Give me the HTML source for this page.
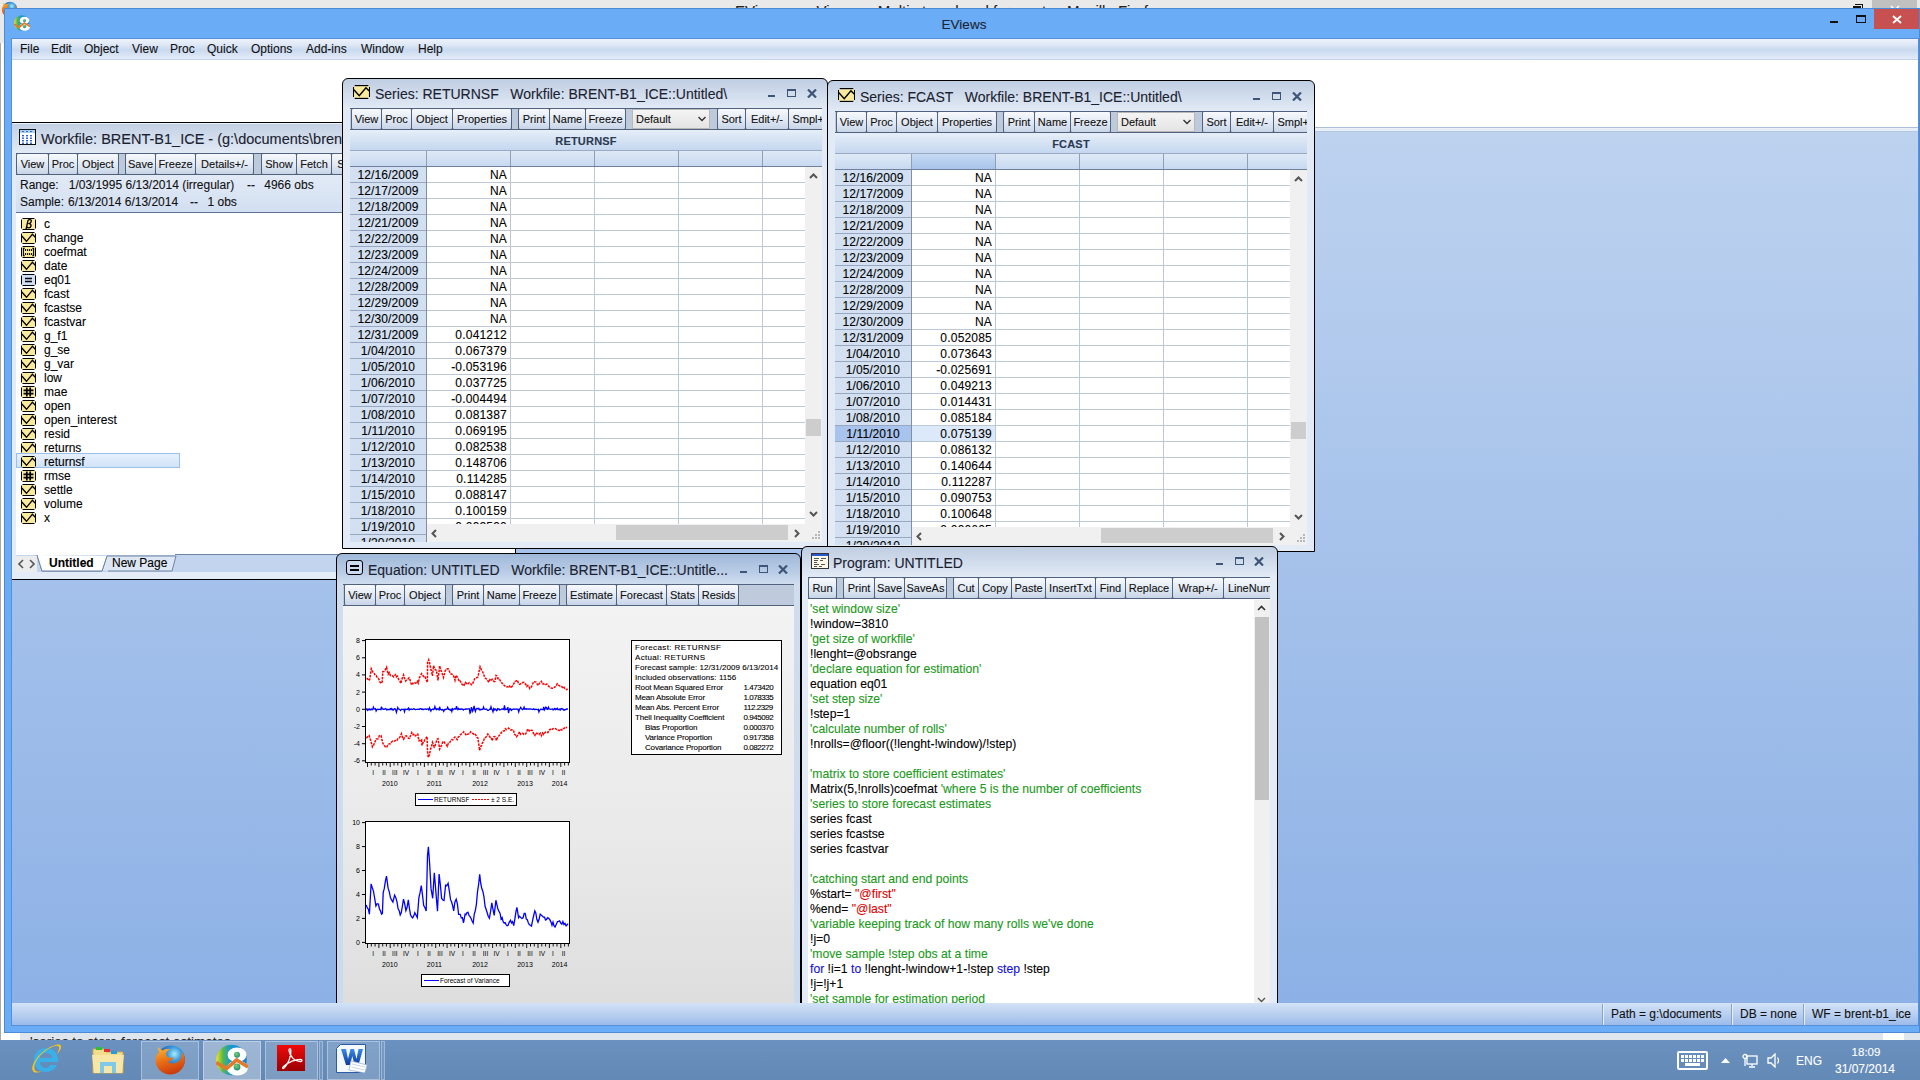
<!DOCTYPE html><html><head><meta charset="utf-8"><style>html,body{margin:0;padding:0;width:1920px;height:1080px;overflow:hidden;position:relative;background:#fff;font-family:"Liberation Sans",sans-serif}div{-webkit-text-stroke:0.1px currentColor}</style></head><body>
<div style="position:absolute;left:0px;top:0px;width:1920px;height:9px;background:#e9e9e9"></div>
<div style="position:absolute;left:0px;top:9px;width:4px;height:34px;background:#e9e9e9"></div>
<div style="position:absolute;left:0px;top:43px;width:1px;height:1000px;background:#a8a8a8"></div>
<div style="position:absolute;left:1872px;top:0px;width:45px;height:9px;background:#c0c0c0"></div>
<svg style="position:absolute;left:1px;top:1px" width="17" height="17" viewBox="0 0 32 32"><defs><radialGradient id="ffga" cx="0.62" cy="0.3" r="0.7"><stop offset="0" stop-color="#a8ecfa"/><stop offset="0.35" stop-color="#3a9ae0"/><stop offset="1" stop-color="#12307a"/></radialGradient><linearGradient id="ffoa" x1="0.3" y1="0" x2="0.6" y2="1"><stop offset="0" stop-color="#f8b030"/><stop offset="0.5" stop-color="#e86a14"/><stop offset="1" stop-color="#c8380c"/></linearGradient></defs><circle cx="17" cy="15.5" r="14" fill="url(#ffga)"/><path d="M5 8L3.5 3L8.5 6.5C11 5 14 4.8 16.5 5.5C13 6.5 11.5 9 12.5 11.5C13.5 14 17 14.5 19.5 13C19 16 16 17.5 13.5 17.5C16.5 20.5 22 20 25.5 16.5C28 13.5 28 10 27.5 7.5C30.5 11 31.5 15 30.5 19C29 26 23 30.5 16 30.5C8 30.5 1.5 24 1.5 16C1.5 13 2.5 10.5 5 8Z" fill="url(#ffoa)"/></svg>
<div style="position:absolute;left:700px;top:0px;width:500px;height:9px;overflow:hidden;">
<div style="position:absolute;left:35px;top:2.18px;line-height:17.23px;font-size:15px;color:#222;white-space:pre;">EViews  —  Vine  —  Multi-step ahead forecasts - Mozilla Firefox</div>
</div>
<div style="position:absolute;left:1855px;top:4px;width:8px;height:5px;border:1px solid #111;border-top-width:1.5px;border-bottom:none;border-left:none;box-sizing:border-box"></div>
<div style="position:absolute;left:1853px;top:6px;width:8px;height:2.5px;background:#111"></div>
<svg style="position:absolute;left:1890px;top:5px" width="10" height="4" viewBox="0 0 10 4"><path d="M1 1L4 4M9 1L6 4" stroke="#fff" stroke-width="1.6"/></svg>
<div style="position:absolute;left:4px;top:8px;width:1916px;height:1025px;background:#6aacf5;box-shadow:inset 0 0 0 1px #4a8ad6"></div>
<svg style="position:absolute;left:14px;top:15px" width="16" height="16" viewBox="0 0 32 32"><defs><linearGradient id="evga" x1="0" y1="0" x2="1" y2="0"><stop offset="0" stop-color="#f2e21e"/><stop offset="0.22" stop-color="#58b84a"/><stop offset="0.45" stop-color="#1a9ad0"/><stop offset="1" stop-color="#1a80cc"/></linearGradient><radialGradient id="evda" cx="0.4" cy="0.35" r="0.7"><stop offset="0" stop-color="#7cd07a"/><stop offset="1" stop-color="#1a8a6a"/></radialGradient></defs><circle cx="15.5" cy="16" r="15.3" fill="url(#evga)"/><ellipse cx="21" cy="10.8" rx="9.4" ry="7.4" fill="#fff"/><ellipse cx="21.3" cy="24" rx="10.6" ry="7.6" fill="#fff"/><circle cx="21" cy="10.8" r="3" fill="url(#evda)"/><circle cx="21" cy="23" r="3.4" fill="url(#evda)"/><polyline points="0.3,18.5 10.5,24.5 20.6,16 32,23" fill="none" stroke="#e27a2a" stroke-width="3.6" stroke-linejoin="miter"/></svg>
<div style="position:absolute;left:664px;width:600px;top:16.57px;line-height:15.51px;font-size:13.5px;color:#1c2530;text-align:center;white-space:pre;">EViews</div>
<div style="position:absolute;left:1830px;top:21px;width:8px;height:2px;background:#111"></div>
<div style="position:absolute;left:1856px;top:15px;width:10px;height:8px;box-sizing:border-box;border:1px solid #111;border-top-width:2px"></div>
<div style="position:absolute;left:1874px;top:9px;width:45px;height:20px;background:#c75050"></div>
<svg style="position:absolute;left:1892px;top:15px" width="10" height="9" viewBox="0 0 10 9"><path d="M1 1L9 8M9 1L1 8" stroke="#fff" stroke-width="1.9"/></svg>
<div style="position:absolute;left:11px;top:38px;width:1908px;height:988px;background:#5590d8"></div>
<div style="position:absolute;left:12px;top:39px;width:1906px;height:21px;background:linear-gradient(#eef3fb 0%,#dde7f5 30%,#c9d9ef 55%,#d8e4f4 80%,#e3ebf7 100%);border-bottom:1px solid #c2d3ea;box-sizing:border-box"></div>
<div style="position:absolute;left:20px;top:42.95px;line-height:13.79px;font-size:12px;color:#111;white-space:pre;">File</div>
<div style="position:absolute;left:51px;top:42.95px;line-height:13.79px;font-size:12px;color:#111;white-space:pre;">Edit</div>
<div style="position:absolute;left:84px;top:42.95px;line-height:13.79px;font-size:12px;color:#111;white-space:pre;">Object</div>
<div style="position:absolute;left:132px;top:42.95px;line-height:13.79px;font-size:12px;color:#111;white-space:pre;">View</div>
<div style="position:absolute;left:170px;top:42.95px;line-height:13.79px;font-size:12px;color:#111;white-space:pre;">Proc</div>
<div style="position:absolute;left:207px;top:42.95px;line-height:13.79px;font-size:12px;color:#111;white-space:pre;">Quick</div>
<div style="position:absolute;left:251px;top:42.95px;line-height:13.79px;font-size:12px;color:#111;white-space:pre;">Options</div>
<div style="position:absolute;left:306px;top:42.95px;line-height:13.79px;font-size:12px;color:#111;white-space:pre;">Add-ins</div>
<div style="position:absolute;left:361px;top:42.95px;line-height:13.79px;font-size:12px;color:#111;white-space:pre;">Window</div>
<div style="position:absolute;left:418px;top:42.95px;line-height:13.79px;font-size:12px;color:#111;white-space:pre;">Help</div>
<div style="position:absolute;left:12px;top:60px;width:1906px;height:68px;background:#fff"></div>
<div style="position:absolute;left:12px;top:127px;width:1906px;height:1px;background:#a9bfdc"></div>
<div style="position:absolute;left:12px;top:128px;width:1906px;height:3px;background:#e8eff9"></div>
<div style="position:absolute;left:12px;top:131px;width:1906px;height:1px;background:#b4c7e2"></div>
<div style="position:absolute;left:12px;top:132px;width:1906px;height:871px;background:linear-gradient(#bdd2ef,#8db1e6)"></div>
<div style="position:absolute;left:12px;top:1003px;width:1906px;height:22px;background:linear-gradient(#d3e2f6,#b9d0f0 50%,#9cbbea)"></div>
<div style="position:absolute;left:1602px;top:1004px;width:1px;height:21px;background:#8aa3c5"></div>
<div style="position:absolute;left:1603px;top:1004px;width:1px;height:21px;background:#e6eef9"></div>
<div style="position:absolute;left:1731px;top:1004px;width:1px;height:21px;background:#8aa3c5"></div>
<div style="position:absolute;left:1732px;top:1004px;width:1px;height:21px;background:#e6eef9"></div>
<div style="position:absolute;left:1803px;top:1004px;width:1px;height:21px;background:#8aa3c5"></div>
<div style="position:absolute;left:1804px;top:1004px;width:1px;height:21px;background:#e6eef9"></div>
<div style="position:absolute;left:1611px;top:1007.95px;line-height:13.79px;font-size:12px;color:#111;white-space:pre;">Path = g:\documents</div>
<div style="position:absolute;left:1740px;top:1007.95px;line-height:13.79px;font-size:12px;color:#111;white-space:pre;">DB = none</div>
<div style="position:absolute;left:1812px;top:1007.95px;line-height:13.79px;font-size:12px;color:#111;white-space:pre;">WF = brent-b1_ice</div>
<div style="position:absolute;left:20px;top:1033px;width:1900px;height:7px;background:#dfe5ec"></div>
<div style="position:absolute;left:1883px;top:1033px;width:21px;height:7px;background:#fff"></div>
<div style="position:absolute;left:20px;top:1033px;width:1900px;height:7px;overflow:hidden;">
<div style="position:absolute;left:10px;top:1.07px;line-height:15.51px;font-size:13.5px;color:#222;white-space:pre;">&#x27;series to store forecast estimates</div>
</div>
<div style="position:absolute;left:0px;top:1040px;width:1920px;height:40px;background:linear-gradient(#6a91bf,#6389b6)"></div>
<div style="position:absolute;left:141px;top:1041px;width:58px;height:39px;box-sizing:border-box;border:1px solid rgba(255,255,255,0.35);background:rgba(255,255,255,0.16)"></div>
<div style="position:absolute;left:203px;top:1041px;width:58px;height:39px;box-sizing:border-box;border:1px solid rgba(255,255,255,0.35);background:rgba(255,255,255,0.34)"></div>
<div style="position:absolute;left:265px;top:1041px;width:53px;height:39px;box-sizing:border-box;border:1px solid rgba(255,255,255,0.35);background:rgba(255,255,255,0.16)"></div>
<div style="position:absolute;left:319px;top:1041px;width:4px;height:39px;box-sizing:border-box;border:1px solid rgba(255,255,255,0.3);background:rgba(255,255,255,0.1)"></div>
<div style="position:absolute;left:327px;top:1041px;width:53px;height:39px;box-sizing:border-box;border:1px solid rgba(255,255,255,0.35);background:rgba(255,255,255,0.16)"></div>
<div style="position:absolute;left:381px;top:1041px;width:4px;height:39px;box-sizing:border-box;border:1px solid rgba(255,255,255,0.3);background:rgba(255,255,255,0.1)"></div>
<svg style="position:absolute;left:30px;top:1043px" width="32" height="32" viewBox="0 0 32 32"><path d="M16 5C9 5 4 10 4 17C4 24 9 29 16 29C21 29 25 26 27 22H20C19 24 18 25 16 25C13 25 10 23 10 19H28C28 18 28 17 28 17C28 10 23 5 16 5ZM10 15C10 12 13 10 16 10C19 10 22 12 22 15Z" fill="#3ab0ea"/><path d="M3 28C0 24 6 14 14 8C22 2 30 0 31 3C32 6 27 11 27 11C29 7 30 4 28 3C25 2 19 5 13 10C6 16 3 23 5 27C6 29 9 29 12 28C8 30 4 30 3 28Z" fill="#f7c21a"/></svg>
<svg style="position:absolute;left:91px;top:1046px" width="34" height="28" viewBox="0 0 34 28"><path d="M2 3H13L15 6H32V27H2Z" fill="#f3dc8a" stroke="#c9a750" stroke-width="1"/><rect x="5" y="1" width="6" height="3" fill="#2ec02e"/><rect x="13" y="3" width="6" height="3" fill="#e03030"/><rect x="20" y="5" width="6" height="3" fill="#2a9ae0"/><path d="M1 9H33L31 27H3Z" fill="#f8e6a6"/><path d="M9 27V16H25V27H21V20H13V27Z" fill="#7ec8ea"/></svg>
<svg style="position:absolute;left:154px;top:1044px" width="32" height="32" viewBox="0 0 32 32"><defs><radialGradient id="ffgb" cx="0.62" cy="0.3" r="0.7"><stop offset="0" stop-color="#a8ecfa"/><stop offset="0.35" stop-color="#3a9ae0"/><stop offset="1" stop-color="#12307a"/></radialGradient><linearGradient id="ffob" x1="0.3" y1="0" x2="0.6" y2="1"><stop offset="0" stop-color="#f8b030"/><stop offset="0.5" stop-color="#e86a14"/><stop offset="1" stop-color="#c8380c"/></linearGradient></defs><circle cx="17" cy="15.5" r="14" fill="url(#ffgb)"/><path d="M5 8L3.5 3L8.5 6.5C11 5 14 4.8 16.5 5.5C13 6.5 11.5 9 12.5 11.5C13.5 14 17 14.5 19.5 13C19 16 16 17.5 13.5 17.5C16.5 20.5 22 20 25.5 16.5C28 13.5 28 10 27.5 7.5C30.5 11 31.5 15 30.5 19C29 26 23 30.5 16 30.5C8 30.5 1.5 24 1.5 16C1.5 13 2.5 10.5 5 8Z" fill="url(#ffob)"/></svg>
<svg style="position:absolute;left:216px;top:1044px" width="32" height="32" viewBox="0 0 32 32"><defs><linearGradient id="evgb" x1="0" y1="0" x2="1" y2="0"><stop offset="0" stop-color="#f2e21e"/><stop offset="0.22" stop-color="#58b84a"/><stop offset="0.45" stop-color="#1a9ad0"/><stop offset="1" stop-color="#1a80cc"/></linearGradient><radialGradient id="evdb" cx="0.4" cy="0.35" r="0.7"><stop offset="0" stop-color="#7cd07a"/><stop offset="1" stop-color="#1a8a6a"/></radialGradient></defs><circle cx="15.5" cy="16" r="15.3" fill="url(#evgb)"/><ellipse cx="21" cy="10.8" rx="9.4" ry="7.4" fill="#fff"/><ellipse cx="21.3" cy="24" rx="10.6" ry="7.6" fill="#fff"/><circle cx="21" cy="10.8" r="3" fill="url(#evdb)"/><circle cx="21" cy="23" r="3.4" fill="url(#evdb)"/><polyline points="0.3,18.5 10.5,24.5 20.6,16 32,23" fill="none" stroke="#e27a2a" stroke-width="3.6" stroke-linejoin="miter"/></svg>
<svg style="position:absolute;left:277px;top:1045px" width="28" height="26" viewBox="0 0 28 26"><defs><linearGradient id="acg" x1="0" y1="0" x2="0" y2="1"><stop offset="0" stop-color="#f00a0a"/><stop offset="1" stop-color="#9a0000"/></linearGradient></defs><rect width="28" height="26" fill="url(#acg)"/><path d="M6.5 21.5C4.8 23.2 5.8 24.3 7.6 22.6C11.5 18.5 14.5 10 13.8 5C13.5 3.2 11.6 3.4 12 5.6C12.8 10.5 17 16.5 23.5 16.5C25.5 16.5 25.5 14.3 23.5 14.3C19 14.3 11.5 16.8 6.5 21.5Z" fill="none" stroke="#fff" stroke-width="1.3"/></svg>
<svg style="position:absolute;left:336px;top:1044px" width="32" height="30" viewBox="0 0 32 30"><defs><linearGradient id="wdg" x1="0" y1="0" x2="0" y2="1"><stop offset="0" stop-color="#3a8ae8"/><stop offset="1" stop-color="#0a3aa0"/></linearGradient></defs><path d="M4.5 0.5H29.5V28.5H0.5V4.5Z" fill="#f4f8fd" stroke="#2a5aa8" stroke-width="1"/><path d="M5 5H10L12 15L14.5 5H18L20.5 15L22.5 5H27L22.5 21H18.5L16.3 12L14 21H10Z" fill="url(#wdg)"/><path d="M15 17L31 21L29 29L13 26Z" fill="#fff" stroke="#9ab4d8" stroke-width="0.8"/><path d="M16 20L29 23M15.5 23L28 26" stroke="#b8cce6" stroke-width="0.8"/></svg>
<div style="position:absolute;left:1677px;top:1051px;width:31px;height:19px;box-sizing:border-box;border:2px solid #fff;border-radius:2px"></div>
<svg style="position:absolute;left:1680px;top:1054px" width="25" height="13" viewBox="0 0 25 13" fill="#fff"><rect x="1" y="1" width="3" height="3"/><rect x="1" y="5" width="3" height="3"/><rect x="5" y="1" width="3" height="3"/><rect x="5" y="5" width="3" height="3"/><rect x="9" y="1" width="3" height="3"/><rect x="9" y="5" width="3" height="3"/><rect x="13" y="1" width="3" height="3"/><rect x="13" y="5" width="3" height="3"/><rect x="17" y="1" width="3" height="3"/><rect x="17" y="5" width="3" height="3"/><rect x="21" y="1" width="3" height="3"/><rect x="21" y="5" width="3" height="3"/><rect x="5" y="9" width="15" height="3"/></svg>
<svg style="position:absolute;left:1721px;top:1058px" width="9" height="5" viewBox="0 0 9 5"><path d="M0 5L4.5 0L9 5Z" fill="#fff"/></svg>
<svg style="position:absolute;left:1742px;top:1053px" width="16" height="15" viewBox="0 0 16 15" fill="none" stroke="#fff" stroke-width="1.3"><rect x="5" y="3" width="10" height="8"/><path d="M10 11V13M7 14H13"/><circle cx="3" cy="3.5" r="2"/><path d="M3 5.5V13"/></svg>
<svg style="position:absolute;left:1767px;top:1053px" width="14" height="15" viewBox="0 0 14 15"><path d="M1 5H4L8 1V14L4 10H1Z" fill="none" stroke="#fff" stroke-width="1.3"/><path d="M10.5 4.5Q12.5 7.5 10.5 10.5" fill="none" stroke="#fff" stroke-width="1.2"/></svg>
<div style="position:absolute;left:1796px;top:1054.95px;line-height:13.79px;font-size:12px;color:#fff;white-space:pre;">ENG</div>
<div style="position:absolute;left:1566px;width:600px;top:1046.41px;line-height:13.21px;font-size:11.5px;color:#fff;text-align:center;white-space:pre;">18:09</div>
<div style="position:absolute;left:1565px;width:600px;top:1062.95px;line-height:13.79px;font-size:12px;color:#fff;text-align:center;white-space:pre;">31/07/2014</div>
<div style="position:absolute;left:12px;top:122px;width:504px;height:458px;box-sizing:border-box;border-top:1px solid #000;border-right:1px solid #000;border-bottom:1px solid #000;background:linear-gradient(#c2d0e4 0px,#d3deed 16px,#e2eaf5 30px,#e4ecf7 100%)"></div>
<div style="position:absolute;left:13px;top:123px;width:502px;height:1px;background:#eef3fa"></div>
<svg style="position:absolute;left:19px;top:129px" width="17" height="16" viewBox="0 0 17 16"><rect x="0.5" y="0.5" width="16" height="15" fill="#fff" stroke="#111"/><rect x="1" y="1" width="15" height="3" fill="#a8d0f0"/><path d="M3 2.5H5M7 2.5H9M11 2.5H13" stroke="#3a6ab0" stroke-width="1"/><rect x="3" y="6.0" width="2" height="1.4" fill="#2a60d8"/><rect x="3" y="8.5" width="2" height="1.4" fill="#2a60d8"/><rect x="3" y="11.0" width="2" height="1.4" fill="#2a60d8"/><rect x="3" y="13.5" width="2" height="1.4" fill="#2a60d8"/><rect x="7" y="6.0" width="2" height="1.4" fill="#2a60d8"/><rect x="7" y="8.5" width="2" height="1.4" fill="#2a60d8"/><rect x="7" y="11.0" width="2" height="1.4" fill="#2a60d8"/><rect x="7" y="13.5" width="2" height="1.4" fill="#2a60d8"/><rect x="11" y="6.0" width="2" height="1.4" fill="#2a60d8"/><rect x="11" y="8.5" width="2" height="1.4" fill="#2a60d8"/><rect x="11" y="11.0" width="2" height="1.4" fill="#2a60d8"/><rect x="11" y="13.5" width="2" height="1.4" fill="#2a60d8"/></svg>
<div style="position:absolute;left:12px;top:124px;width:330px;height:28px;overflow:hidden;">
<div style="position:absolute;left:29px;top:6.65px;line-height:16.66px;font-size:14.5px;color:#1a2230;white-space:pre;">Workfile: BRENT-B1_ICE - (g:\documents\brent-b1_ice.wf1)</div>
</div>
<div style="position:absolute;left:16px;top:153px;width:499px;height:22px;background:#bfcbdc;border-top:1px solid #50627e;border-bottom:1px solid #50627e;box-sizing:border-box"></div>
<div style="position:absolute;left:16px;top:153px;width:33px;height:22px;box-sizing:border-box;border:1px solid #50627e;border-radius:2px;background:linear-gradient(#f7f9fd,#e3eaf4 50%,#c8d5e7);"></div>
<div style="position:absolute;left:-267.5px;width:600px;top:158.37px;line-height:12.64px;font-size:11px;color:#111;text-align:center;white-space:pre;">View</div>
<div style="position:absolute;left:48px;top:153px;width:30px;height:22px;box-sizing:border-box;border:1px solid #50627e;border-radius:2px;background:linear-gradient(#f7f9fd,#e3eaf4 50%,#c8d5e7);"></div>
<div style="position:absolute;left:-237.0px;width:600px;top:158.37px;line-height:12.64px;font-size:11px;color:#111;text-align:center;white-space:pre;">Proc</div>
<div style="position:absolute;left:77px;top:153px;width:42px;height:22px;box-sizing:border-box;border:1px solid #50627e;border-radius:2px;background:linear-gradient(#f7f9fd,#e3eaf4 50%,#c8d5e7);"></div>
<div style="position:absolute;left:-202.0px;width:600px;top:158.37px;line-height:12.64px;font-size:11px;color:#111;text-align:center;white-space:pre;">Object</div>
<div style="position:absolute;left:119px;top:154px;width:7px;height:20px;background:#bccadb"></div>
<div style="position:absolute;left:125px;top:153px;width:31px;height:22px;box-sizing:border-box;border:1px solid #50627e;border-radius:2px;background:linear-gradient(#f7f9fd,#e3eaf4 50%,#c8d5e7);"></div>
<div style="position:absolute;left:-159.5px;width:600px;top:158.37px;line-height:12.64px;font-size:11px;color:#111;text-align:center;white-space:pre;">Save</div>
<div style="position:absolute;left:155px;top:153px;width:41px;height:22px;box-sizing:border-box;border:1px solid #50627e;border-radius:2px;background:linear-gradient(#f7f9fd,#e3eaf4 50%,#c8d5e7);"></div>
<div style="position:absolute;left:-124.5px;width:600px;top:158.37px;line-height:12.64px;font-size:11px;color:#111;text-align:center;white-space:pre;">Freeze</div>
<div style="position:absolute;left:195px;top:153px;width:59px;height:22px;box-sizing:border-box;border:1px solid #50627e;border-radius:2px;background:linear-gradient(#f7f9fd,#e3eaf4 50%,#c8d5e7);"></div>
<div style="position:absolute;left:-75.5px;width:600px;top:158.37px;line-height:12.64px;font-size:11px;color:#111;text-align:center;white-space:pre;">Details+/-</div>
<div style="position:absolute;left:254px;top:154px;width:7px;height:20px;background:#bccadb"></div>
<div style="position:absolute;left:261px;top:153px;width:36px;height:22px;box-sizing:border-box;border:1px solid #50627e;border-radius:2px;background:linear-gradient(#f7f9fd,#e3eaf4 50%,#c8d5e7);"></div>
<div style="position:absolute;left:-21.0px;width:600px;top:158.37px;line-height:12.64px;font-size:11px;color:#111;text-align:center;white-space:pre;">Show</div>
<div style="position:absolute;left:296px;top:153px;width:36px;height:22px;box-sizing:border-box;border:1px solid #50627e;border-radius:2px;background:linear-gradient(#f7f9fd,#e3eaf4 50%,#c8d5e7);"></div>
<div style="position:absolute;left:14.0px;width:600px;top:158.37px;line-height:12.64px;font-size:11px;color:#111;text-align:center;white-space:pre;">Fetch</div>
<div style="position:absolute;left:331px;top:153px;width:39px;height:22px;box-sizing:border-box;border:1px solid #50627e;border-radius:2px;background:linear-gradient(#f7f9fd,#e3eaf4 50%,#c8d5e7);"></div>
<div style="position:absolute;left:50.5px;width:600px;top:158.37px;line-height:12.64px;font-size:11px;color:#111;text-align:center;white-space:pre;">Store</div>
<div style="position:absolute;left:369px;top:153px;width:41px;height:22px;box-sizing:border-box;border:1px solid #50627e;border-radius:2px;background:linear-gradient(#f7f9fd,#e3eaf4 50%,#c8d5e7);"></div>
<div style="position:absolute;left:89.5px;width:600px;top:158.37px;line-height:12.64px;font-size:11px;color:#111;text-align:center;white-space:pre;">Delete</div>
<div style="position:absolute;left:409px;top:153px;width:35px;height:22px;box-sizing:border-box;border:1px solid #50627e;border-radius:2px;background:linear-gradient(#f7f9fd,#e3eaf4 50%,#c8d5e7);"></div>
<div style="position:absolute;left:126.5px;width:600px;top:158.37px;line-height:12.64px;font-size:11px;color:#111;text-align:center;white-space:pre;">Genr</div>
<div style="position:absolute;left:443px;top:153px;width:47px;height:22px;box-sizing:border-box;border:1px solid #50627e;border-radius:2px;background:linear-gradient(#f7f9fd,#e3eaf4 50%,#c8d5e7);"></div>
<div style="position:absolute;left:166.5px;width:600px;top:158.37px;line-height:12.64px;font-size:11px;color:#111;text-align:center;white-space:pre;">Sample</div>
<div style="position:absolute;left:16px;top:175px;width:499px;height:38px;background:linear-gradient(#e2eaf6,#d2dff1)"></div>
<div style="position:absolute;left:16px;top:212px;width:499px;height:1px;background:#5f7495"></div>
<div style="position:absolute;left:20px;top:178.95px;line-height:13.79px;font-size:12px;color:#111;white-space:pre;">Range:</div>
<div style="position:absolute;left:68.75px;top:178.95px;line-height:13.79px;font-size:12px;color:#111;white-space:pre;">1/03/1995 6/13/2014 (irregular)</div>
<div style="position:absolute;left:247px;top:178.95px;line-height:13.79px;font-size:12px;color:#111;white-space:pre;">--</div>
<div style="position:absolute;left:264.25px;top:178.95px;line-height:13.79px;font-size:12px;color:#111;white-space:pre;">4966 obs</div>
<div style="position:absolute;left:20px;top:195.95px;line-height:13.79px;font-size:12px;color:#111;white-space:pre;">Sample:</div>
<div style="position:absolute;left:68px;top:195.95px;line-height:13.79px;font-size:12px;color:#111;white-space:pre;">6/13/2014 6/13/2014</div>
<div style="position:absolute;left:190px;top:195.95px;line-height:13.79px;font-size:12px;color:#111;white-space:pre;">--</div>
<div style="position:absolute;left:207.5px;top:195.95px;line-height:13.79px;font-size:12px;color:#111;white-space:pre;">1 obs</div>
<div style="position:absolute;left:16px;top:213px;width:499px;height:343px;background:#fff"></div>
<svg style="position:absolute;left:21px;top:218px" width="15" height="12" viewBox="0 0 15 12"><path d="M1.5 0.5H13.5M14.5 1.5V10.5M13.5 11.5H1.5M0.5 10.5V1.5" stroke="#000" stroke-width="1.15" fill="none"/><rect x="1" y="1" width="13" height="10" fill="#faea9c"/><path d="M5 11.5L7 2.5Q7.5 1.5 9 1.6Q10.6 1.8 10.3 3.3Q10 4.8 8.3 5.6Q10.3 6 10 8Q9.6 9.8 7.8 9.8Q6.6 9.8 5.9 9" fill="none" stroke="#000" stroke-width="1.3"/></svg>
<div style="position:absolute;left:44px;top:218.45px;line-height:13.79px;font-size:12px;color:#000;white-space:pre;">c</div>
<svg style="position:absolute;left:21px;top:232px" width="15" height="12" viewBox="0 0 15 12"><path d="M1.5 0.5H13.5M14.5 1.5V10.5M13.5 11.5H1.5M0.5 10.5V1.5" stroke="#000" stroke-width="1.15" fill="none"/><rect x="1" y="1" width="13" height="10" fill="#faea9c"/><polyline points="0.8,4 5.5,9.3 11.4,2.3 14.3,5.2" fill="none" stroke="#000" stroke-width="1.3"/></svg>
<div style="position:absolute;left:44px;top:232.45px;line-height:13.79px;font-size:12px;color:#000;white-space:pre;">change</div>
<svg style="position:absolute;left:21px;top:246px" width="15" height="12" viewBox="0 0 15 12"><path d="M1.5 0.5H13.5M14.5 1.5V10.5M13.5 11.5H1.5M0.5 10.5V1.5" stroke="#000" stroke-width="1.15" fill="none"/><rect x="1" y="1" width="13" height="10" fill="#faea9c"/><path d="M3.8 2.3H2.4V9.8H3.8M11.2 2.3H12.6V9.8H11.2" fill="none" stroke="#000" stroke-width="1.1"/><rect x="3.9" y="3" width="1.2" height="2" rx="0.5" fill="#000"/><rect x="3.9" y="7" width="1.2" height="2" rx="0.5" fill="#000"/><rect x="6" y="3" width="1.2" height="2" rx="0.5" fill="#000"/><rect x="6" y="7" width="1.2" height="2" rx="0.5" fill="#000"/><rect x="8" y="3" width="1.2" height="2" rx="0.5" fill="#000"/><rect x="8" y="7" width="1.2" height="2" rx="0.5" fill="#000"/><rect x="10" y="3" width="1.2" height="2" rx="0.5" fill="#000"/><rect x="10" y="7" width="1.2" height="2" rx="0.5" fill="#000"/></svg>
<div style="position:absolute;left:44px;top:246.45px;line-height:13.79px;font-size:12px;color:#000;white-space:pre;">coefmat</div>
<svg style="position:absolute;left:21px;top:260px" width="15" height="12" viewBox="0 0 15 12"><path d="M1.5 0.5H13.5M14.5 1.5V10.5M13.5 11.5H1.5M0.5 10.5V1.5" stroke="#000" stroke-width="1.15" fill="none"/><rect x="1" y="1" width="13" height="10" fill="#faea9c"/><polyline points="0.8,4 5.5,9.3 11.4,2.3 14.3,5.2" fill="none" stroke="#000" stroke-width="1.3"/></svg>
<div style="position:absolute;left:44px;top:260.45px;line-height:13.79px;font-size:12px;color:#000;white-space:pre;">date</div>
<svg style="position:absolute;left:21px;top:274px" width="15" height="12" viewBox="0 0 15 12"><path d="M1.5 0.5H13.5M14.5 1.5V10.5M13.5 11.5H1.5M0.5 10.5V1.5" stroke="#000" stroke-width="1.15" fill="none"/><rect x="1" y="1" width="13" height="10" fill="#cfe0f7"/><path d="M4 4.5H11M4 7.5H11" stroke="#000" stroke-width="1.6"/></svg>
<div style="position:absolute;left:44px;top:274.45px;line-height:13.79px;font-size:12px;color:#000;white-space:pre;">eq01</div>
<svg style="position:absolute;left:21px;top:288px" width="15" height="12" viewBox="0 0 15 12"><path d="M1.5 0.5H13.5M14.5 1.5V10.5M13.5 11.5H1.5M0.5 10.5V1.5" stroke="#000" stroke-width="1.15" fill="none"/><rect x="1" y="1" width="13" height="10" fill="#faea9c"/><polyline points="0.8,4 5.5,9.3 11.4,2.3 14.3,5.2" fill="none" stroke="#000" stroke-width="1.3"/></svg>
<div style="position:absolute;left:44px;top:288.45px;line-height:13.79px;font-size:12px;color:#000;white-space:pre;">fcast</div>
<svg style="position:absolute;left:21px;top:302px" width="15" height="12" viewBox="0 0 15 12"><path d="M1.5 0.5H13.5M14.5 1.5V10.5M13.5 11.5H1.5M0.5 10.5V1.5" stroke="#000" stroke-width="1.15" fill="none"/><rect x="1" y="1" width="13" height="10" fill="#faea9c"/><polyline points="0.8,4 5.5,9.3 11.4,2.3 14.3,5.2" fill="none" stroke="#000" stroke-width="1.3"/></svg>
<div style="position:absolute;left:44px;top:302.45px;line-height:13.79px;font-size:12px;color:#000;white-space:pre;">fcastse</div>
<svg style="position:absolute;left:21px;top:316px" width="15" height="12" viewBox="0 0 15 12"><path d="M1.5 0.5H13.5M14.5 1.5V10.5M13.5 11.5H1.5M0.5 10.5V1.5" stroke="#000" stroke-width="1.15" fill="none"/><rect x="1" y="1" width="13" height="10" fill="#faea9c"/><polyline points="0.8,4 5.5,9.3 11.4,2.3 14.3,5.2" fill="none" stroke="#000" stroke-width="1.3"/></svg>
<div style="position:absolute;left:44px;top:316.45px;line-height:13.79px;font-size:12px;color:#000;white-space:pre;">fcastvar</div>
<svg style="position:absolute;left:21px;top:330px" width="15" height="12" viewBox="0 0 15 12"><path d="M1.5 0.5H13.5M14.5 1.5V10.5M13.5 11.5H1.5M0.5 10.5V1.5" stroke="#000" stroke-width="1.15" fill="none"/><rect x="1" y="1" width="13" height="10" fill="#faea9c"/><polyline points="0.8,4 5.5,9.3 11.4,2.3 14.3,5.2" fill="none" stroke="#000" stroke-width="1.3"/></svg>
<div style="position:absolute;left:44px;top:330.45px;line-height:13.79px;font-size:12px;color:#000;white-space:pre;">g_f1</div>
<svg style="position:absolute;left:21px;top:344px" width="15" height="12" viewBox="0 0 15 12"><path d="M1.5 0.5H13.5M14.5 1.5V10.5M13.5 11.5H1.5M0.5 10.5V1.5" stroke="#000" stroke-width="1.15" fill="none"/><rect x="1" y="1" width="13" height="10" fill="#faea9c"/><polyline points="0.8,4 5.5,9.3 11.4,2.3 14.3,5.2" fill="none" stroke="#000" stroke-width="1.3"/></svg>
<div style="position:absolute;left:44px;top:344.45px;line-height:13.79px;font-size:12px;color:#000;white-space:pre;">g_se</div>
<svg style="position:absolute;left:21px;top:358px" width="15" height="12" viewBox="0 0 15 12"><path d="M1.5 0.5H13.5M14.5 1.5V10.5M13.5 11.5H1.5M0.5 10.5V1.5" stroke="#000" stroke-width="1.15" fill="none"/><rect x="1" y="1" width="13" height="10" fill="#faea9c"/><polyline points="0.8,4 5.5,9.3 11.4,2.3 14.3,5.2" fill="none" stroke="#000" stroke-width="1.3"/></svg>
<div style="position:absolute;left:44px;top:358.45px;line-height:13.79px;font-size:12px;color:#000;white-space:pre;">g_var</div>
<svg style="position:absolute;left:21px;top:372px" width="15" height="12" viewBox="0 0 15 12"><path d="M1.5 0.5H13.5M14.5 1.5V10.5M13.5 11.5H1.5M0.5 10.5V1.5" stroke="#000" stroke-width="1.15" fill="none"/><rect x="1" y="1" width="13" height="10" fill="#faea9c"/><polyline points="0.8,4 5.5,9.3 11.4,2.3 14.3,5.2" fill="none" stroke="#000" stroke-width="1.3"/></svg>
<div style="position:absolute;left:44px;top:372.45px;line-height:13.79px;font-size:12px;color:#000;white-space:pre;">low</div>
<svg style="position:absolute;left:21px;top:386px" width="15" height="12" viewBox="0 0 15 12"><path d="M1.5 0.5H13.5M14.5 1.5V10.5M13.5 11.5H1.5M0.5 10.5V1.5" stroke="#000" stroke-width="1.15" fill="none"/><rect x="1" y="1" width="13" height="10" fill="#faea9c"/><path d="M2.5 4.3H12.5M2.5 7.7H12.5M5.8 1.5V10.5M9.2 1.5V10.5" stroke="#000" stroke-width="1.7"/></svg>
<div style="position:absolute;left:44px;top:386.45px;line-height:13.79px;font-size:12px;color:#000;white-space:pre;">mae</div>
<svg style="position:absolute;left:21px;top:400px" width="15" height="12" viewBox="0 0 15 12"><path d="M1.5 0.5H13.5M14.5 1.5V10.5M13.5 11.5H1.5M0.5 10.5V1.5" stroke="#000" stroke-width="1.15" fill="none"/><rect x="1" y="1" width="13" height="10" fill="#faea9c"/><polyline points="0.8,4 5.5,9.3 11.4,2.3 14.3,5.2" fill="none" stroke="#000" stroke-width="1.3"/></svg>
<div style="position:absolute;left:44px;top:400.45px;line-height:13.79px;font-size:12px;color:#000;white-space:pre;">open</div>
<svg style="position:absolute;left:21px;top:414px" width="15" height="12" viewBox="0 0 15 12"><path d="M1.5 0.5H13.5M14.5 1.5V10.5M13.5 11.5H1.5M0.5 10.5V1.5" stroke="#000" stroke-width="1.15" fill="none"/><rect x="1" y="1" width="13" height="10" fill="#faea9c"/><polyline points="0.8,4 5.5,9.3 11.4,2.3 14.3,5.2" fill="none" stroke="#000" stroke-width="1.3"/></svg>
<div style="position:absolute;left:44px;top:414.45px;line-height:13.79px;font-size:12px;color:#000;white-space:pre;">open_interest</div>
<svg style="position:absolute;left:21px;top:428px" width="15" height="12" viewBox="0 0 15 12"><path d="M1.5 0.5H13.5M14.5 1.5V10.5M13.5 11.5H1.5M0.5 10.5V1.5" stroke="#000" stroke-width="1.15" fill="none"/><rect x="1" y="1" width="13" height="10" fill="#faea9c"/><polyline points="0.8,4 5.5,9.3 11.4,2.3 14.3,5.2" fill="none" stroke="#000" stroke-width="1.3"/></svg>
<div style="position:absolute;left:44px;top:428.45px;line-height:13.79px;font-size:12px;color:#000;white-space:pre;">resid</div>
<svg style="position:absolute;left:21px;top:442px" width="15" height="12" viewBox="0 0 15 12"><path d="M1.5 0.5H13.5M14.5 1.5V10.5M13.5 11.5H1.5M0.5 10.5V1.5" stroke="#000" stroke-width="1.15" fill="none"/><rect x="1" y="1" width="13" height="10" fill="#faea9c"/><polyline points="0.8,4 5.5,9.3 11.4,2.3 14.3,5.2" fill="none" stroke="#000" stroke-width="1.3"/></svg>
<div style="position:absolute;left:44px;top:442.45px;line-height:13.79px;font-size:12px;color:#000;white-space:pre;">returns</div>
<div style="position:absolute;left:16px;top:452.5px;width:164px;height:15px;box-sizing:border-box;border:1px solid #9cc0ec;background:linear-gradient(#e6f0fc,#d2e3f8)"></div>
<svg style="position:absolute;left:21px;top:456px" width="15" height="12" viewBox="0 0 15 12"><path d="M1.5 0.5H13.5M14.5 1.5V10.5M13.5 11.5H1.5M0.5 10.5V1.5" stroke="#000" stroke-width="1.15" fill="none"/><rect x="1" y="1" width="13" height="10" fill="#faea9c"/><polyline points="0.8,4 5.5,9.3 11.4,2.3 14.3,5.2" fill="none" stroke="#000" stroke-width="1.3"/></svg>
<div style="position:absolute;left:44px;top:456.45px;line-height:13.79px;font-size:12px;color:#000;white-space:pre;">returnsf</div>
<svg style="position:absolute;left:21px;top:470px" width="15" height="12" viewBox="0 0 15 12"><path d="M1.5 0.5H13.5M14.5 1.5V10.5M13.5 11.5H1.5M0.5 10.5V1.5" stroke="#000" stroke-width="1.15" fill="none"/><rect x="1" y="1" width="13" height="10" fill="#faea9c"/><path d="M2.5 4.3H12.5M2.5 7.7H12.5M5.8 1.5V10.5M9.2 1.5V10.5" stroke="#000" stroke-width="1.7"/></svg>
<div style="position:absolute;left:44px;top:470.45px;line-height:13.79px;font-size:12px;color:#000;white-space:pre;">rmse</div>
<svg style="position:absolute;left:21px;top:484px" width="15" height="12" viewBox="0 0 15 12"><path d="M1.5 0.5H13.5M14.5 1.5V10.5M13.5 11.5H1.5M0.5 10.5V1.5" stroke="#000" stroke-width="1.15" fill="none"/><rect x="1" y="1" width="13" height="10" fill="#faea9c"/><polyline points="0.8,4 5.5,9.3 11.4,2.3 14.3,5.2" fill="none" stroke="#000" stroke-width="1.3"/></svg>
<div style="position:absolute;left:44px;top:484.45px;line-height:13.79px;font-size:12px;color:#000;white-space:pre;">settle</div>
<svg style="position:absolute;left:21px;top:498px" width="15" height="12" viewBox="0 0 15 12"><path d="M1.5 0.5H13.5M14.5 1.5V10.5M13.5 11.5H1.5M0.5 10.5V1.5" stroke="#000" stroke-width="1.15" fill="none"/><rect x="1" y="1" width="13" height="10" fill="#faea9c"/><polyline points="0.8,4 5.5,9.3 11.4,2.3 14.3,5.2" fill="none" stroke="#000" stroke-width="1.3"/></svg>
<div style="position:absolute;left:44px;top:498.45px;line-height:13.79px;font-size:12px;color:#000;white-space:pre;">volume</div>
<svg style="position:absolute;left:21px;top:512px" width="15" height="12" viewBox="0 0 15 12"><path d="M1.5 0.5H13.5M14.5 1.5V10.5M13.5 11.5H1.5M0.5 10.5V1.5" stroke="#000" stroke-width="1.15" fill="none"/><rect x="1" y="1" width="13" height="10" fill="#faea9c"/><polyline points="0.8,4 5.5,9.3 11.4,2.3 14.3,5.2" fill="none" stroke="#000" stroke-width="1.3"/></svg>
<div style="position:absolute;left:44px;top:512.45px;line-height:13.79px;font-size:12px;color:#000;white-space:pre;">x</div>
<div style="position:absolute;left:16px;top:555px;width:499px;height:17px;background:#c3d5ee"></div>
<div style="position:absolute;left:175px;top:554px;width:340px;height:1px;background:#6f84a3"></div>
<div style="position:absolute;left:16px;top:556px;width:21px;height:16px;background:#ececec"></div>
<svg style="position:absolute;left:17px;top:559px" width="20" height="10" viewBox="0 0 20 10"><path d="M6 1L2 5L6 9M13 1L17 5L13 9" fill="none" stroke="#555" stroke-width="1.6"/></svg>
<svg style="position:absolute;left:36px;top:553px" width="142" height="20" viewBox="0 0 142 20"><path d="M1 2L6 18H66L71 3H140L136 18H72" fill="#dde7f4" stroke="#6f84a3" stroke-width="1"/><path d="M1 2L6 18H66L71 3" fill="#fff" stroke="#6f84a3" stroke-width="1"/></svg>
<div style="position:absolute;left:49px;top:556.95px;line-height:13.79px;font-size:12px;color:#000;white-space:pre;font-weight:bold">Untitled</div>
<div style="position:absolute;left:112px;top:556.95px;line-height:13.79px;font-size:12px;color:#000;white-space:pre;">New Page</div>
<div style="position:absolute;left:342px;top:78px;width:486px;height:471px;box-sizing:border-box;border:1px solid #000;border-radius:6px 6px 0 0;background:linear-gradient(#c0cee2 0px,#d4dfee 18px,#e2eaf5 30px,#e3ebf6 100%);overflow:hidden"></div>
<svg style="position:absolute;left:353px;top:85px" width="17" height="14" viewBox="0 0 15 12"><path d="M1.5 0.5H13.5M14.5 1.5V10.5M13.5 11.5H1.5M0.5 10.5V1.5" stroke="#000" stroke-width="1.15" fill="none"/><rect x="1" y="1" width="13" height="10" fill="#faea9c"/><polyline points="0.8,4 5.5,9.3 11.4,2.3 14.3,5.2" fill="none" stroke="#000" stroke-width="1.3"/></svg>
<div style="position:absolute;left:343px;top:79px;width:418px;height:29px;overflow:hidden;">
<div style="position:absolute;left:32px;top:7.11px;line-height:16.09px;font-size:14px;color:#1a2230;white-space:pre;">Series: RETURNSF   Workfile: BRENT-B1_ICE::Untitled\</div>
</div>
<div style="position:absolute;left:767.5px;top:94.8px;width:7.5px;height:2.2px;background:#3d5577"></div>
<div style="position:absolute;left:787px;top:89px;width:9px;height:8px;box-sizing:border-box;border:1.3px solid #3d5577;border-top-width:2.6px"></div>
<svg style="position:absolute;left:807px;top:89px" width="10" height="9" viewBox="0 0 10 9"><path d="M1 0.5L9 8.5M9 0.5L1 8.5" stroke="#3d5577" stroke-width="2.2"/></svg>
<div style="position:absolute;left:350px;top:108px;width:472px;height:22px;overflow:hidden;">
<div style="position:absolute;left:0px;top:0px;width:472px;height:22px;background:#bfcbdc;border-top:1px solid #50627e;border-bottom:1px solid #50627e;box-sizing:border-box"></div><div style="position:absolute;left:1px;top:0px;width:31px;height:22px;box-sizing:border-box;border:1px solid #50627e;border-radius:2px;background:linear-gradient(#f7f9fd,#e3eaf4 50%,#c8d5e7);"></div><div style="position:absolute;left:-283.5px;width:600px;top:5.37px;line-height:12.64px;font-size:11px;color:#111;text-align:center;white-space:pre;">View</div><div style="position:absolute;left:31px;top:0px;width:31px;height:22px;box-sizing:border-box;border:1px solid #50627e;border-radius:2px;background:linear-gradient(#f7f9fd,#e3eaf4 50%,#c8d5e7);"></div><div style="position:absolute;left:-253.5px;width:600px;top:5.37px;line-height:12.64px;font-size:11px;color:#111;text-align:center;white-space:pre;">Proc</div><div style="position:absolute;left:61px;top:0px;width:42px;height:22px;box-sizing:border-box;border:1px solid #50627e;border-radius:2px;background:linear-gradient(#f7f9fd,#e3eaf4 50%,#c8d5e7);"></div><div style="position:absolute;left:-218.0px;width:600px;top:5.37px;line-height:12.64px;font-size:11px;color:#111;text-align:center;white-space:pre;">Object</div><div style="position:absolute;left:102px;top:0px;width:60px;height:22px;box-sizing:border-box;border:1px solid #50627e;border-radius:2px;background:linear-gradient(#f7f9fd,#e3eaf4 50%,#c8d5e7);"></div><div style="position:absolute;left:-168.0px;width:600px;top:5.37px;line-height:12.64px;font-size:11px;color:#111;text-align:center;white-space:pre;">Properties</div><div style="position:absolute;left:162px;top:1px;width:7px;height:20px;background:#bccadb"></div><div style="position:absolute;left:168px;top:0px;width:32px;height:22px;box-sizing:border-box;border:1px solid #50627e;border-radius:2px;background:linear-gradient(#f7f9fd,#e3eaf4 50%,#c8d5e7);"></div><div style="position:absolute;left:-116.0px;width:600px;top:5.37px;line-height:12.64px;font-size:11px;color:#111;text-align:center;white-space:pre;">Print</div><div style="position:absolute;left:199px;top:0px;width:37px;height:22px;box-sizing:border-box;border:1px solid #50627e;border-radius:2px;background:linear-gradient(#f7f9fd,#e3eaf4 50%,#c8d5e7);"></div><div style="position:absolute;left:-82.5px;width:600px;top:5.37px;line-height:12.64px;font-size:11px;color:#111;text-align:center;white-space:pre;">Name</div><div style="position:absolute;left:235px;top:0px;width:41px;height:22px;box-sizing:border-box;border:1px solid #50627e;border-radius:2px;background:linear-gradient(#f7f9fd,#e3eaf4 50%,#c8d5e7);"></div><div style="position:absolute;left:-44.5px;width:600px;top:5.37px;line-height:12.64px;font-size:11px;color:#111;text-align:center;white-space:pre;">Freeze</div><div style="position:absolute;left:276px;top:1px;width:6px;height:20px;background:#bccadb"></div><div style="position:absolute;left:360px;top:1px;width:8px;height:20px;background:#bccadb"></div><div style="position:absolute;left:367px;top:0px;width:29px;height:22px;box-sizing:border-box;border:1px solid #50627e;border-radius:2px;background:linear-gradient(#f7f9fd,#e3eaf4 50%,#c8d5e7);"></div><div style="position:absolute;left:81.5px;width:600px;top:5.37px;line-height:12.64px;font-size:11px;color:#111;text-align:center;white-space:pre;">Sort</div><div style="position:absolute;left:395px;top:0px;width:44px;height:22px;box-sizing:border-box;border:1px solid #50627e;border-radius:2px;background:linear-gradient(#f7f9fd,#e3eaf4 50%,#c8d5e7);"></div><div style="position:absolute;left:117.0px;width:600px;top:5.37px;line-height:12.64px;font-size:11px;color:#111;text-align:center;white-space:pre;">Edit+/-</div><div style="position:absolute;left:438px;top:0px;width:47px;height:22px;box-sizing:border-box;border:1px solid #50627e;border-radius:2px;background:linear-gradient(#f7f9fd,#e3eaf4 50%,#c8d5e7);"></div><div style="position:absolute;left:161.5px;width:600px;top:5.37px;line-height:12.64px;font-size:11px;color:#111;text-align:center;white-space:pre;">Smpl+/-</div><div style="position:absolute;left:282px;top:1px;width:78px;height:20px;box-sizing:border-box;border:1px solid #b8b8b8;background:linear-gradient(#f4f4f4,#e4e4e4);"></div><div style="position:absolute;left:286px;top:5.37px;line-height:12.64px;font-size:11px;color:#111;white-space:pre;">Default</div><svg style="position:absolute;left:348px;top:8px" width="8" height="6" viewBox="0 0 8 6"><polyline points="0.5,1 4,4.5 7.5,1" fill="none" stroke="#333" stroke-width="1.4"/></svg>
</div>
<div style="position:absolute;left:350px;top:130px;width:472px;height:21px;background:linear-gradient(#e6eef8,#c3d6ef)"></div>
<div style="position:absolute;left:286px;width:600px;top:134.87px;line-height:12.64px;font-size:11px;color:#2a3a52;text-align:center;white-space:pre;font-weight:bold;letter-spacing:0.2px">RETURNSF</div>
<div style="position:absolute;left:350px;top:150px;width:472px;height:1px;background:#9aaac2"></div>
<div style="position:absolute;left:350px;top:151px;width:472px;height:16px;background:linear-gradient(#dfe9f6,#c6d8f0)"></div>
<div style="position:absolute;left:426px;top:151px;width:1px;height:16px;background:#8e9fb8"></div>
<div style="position:absolute;left:510px;top:151px;width:1px;height:16px;background:#8e9fb8"></div>
<div style="position:absolute;left:594px;top:151px;width:1px;height:16px;background:#8e9fb8"></div>
<div style="position:absolute;left:678px;top:151px;width:1px;height:16px;background:#8e9fb8"></div>
<div style="position:absolute;left:762px;top:151px;width:1px;height:16px;background:#8e9fb8"></div>
<div style="position:absolute;left:350px;top:166px;width:472px;height:1px;background:#6f809c"></div>
<div style="position:absolute;left:350px;top:167px;width:455px;height:375px;overflow:hidden;">
<div style="position:absolute;left:0px;top:0px;width:76px;height:375px;background:#e3ebf6"></div>
<div style="position:absolute;left:0px;top:0px;width:76px;height:15px;background:#d2e0f2"></div>
<div style="position:absolute;left:0px;top:15px;width:76px;height:1px;background:#97a8c0"></div>
<div style="position:absolute;left:-262px;width:600px;top:2.45px;line-height:13.79px;font-size:12px;color:#000;text-align:center;white-space:pre;letter-spacing:0.1px">12/16/2009</div>
<div style="position:absolute;left:0px;top:16px;width:76px;height:15px;background:#d2e0f2"></div>
<div style="position:absolute;left:0px;top:31px;width:76px;height:1px;background:#97a8c0"></div>
<div style="position:absolute;left:-262px;width:600px;top:18.45px;line-height:13.79px;font-size:12px;color:#000;text-align:center;white-space:pre;letter-spacing:0.1px">12/17/2009</div>
<div style="position:absolute;left:0px;top:32px;width:76px;height:15px;background:#d2e0f2"></div>
<div style="position:absolute;left:0px;top:47px;width:76px;height:1px;background:#97a8c0"></div>
<div style="position:absolute;left:-262px;width:600px;top:34.45px;line-height:13.79px;font-size:12px;color:#000;text-align:center;white-space:pre;letter-spacing:0.1px">12/18/2009</div>
<div style="position:absolute;left:0px;top:48px;width:76px;height:15px;background:#d2e0f2"></div>
<div style="position:absolute;left:0px;top:63px;width:76px;height:1px;background:#97a8c0"></div>
<div style="position:absolute;left:-262px;width:600px;top:50.45px;line-height:13.79px;font-size:12px;color:#000;text-align:center;white-space:pre;letter-spacing:0.1px">12/21/2009</div>
<div style="position:absolute;left:0px;top:64px;width:76px;height:15px;background:#d2e0f2"></div>
<div style="position:absolute;left:0px;top:79px;width:76px;height:1px;background:#97a8c0"></div>
<div style="position:absolute;left:-262px;width:600px;top:66.45px;line-height:13.79px;font-size:12px;color:#000;text-align:center;white-space:pre;letter-spacing:0.1px">12/22/2009</div>
<div style="position:absolute;left:0px;top:80px;width:76px;height:15px;background:#d2e0f2"></div>
<div style="position:absolute;left:0px;top:95px;width:76px;height:1px;background:#97a8c0"></div>
<div style="position:absolute;left:-262px;width:600px;top:82.45px;line-height:13.79px;font-size:12px;color:#000;text-align:center;white-space:pre;letter-spacing:0.1px">12/23/2009</div>
<div style="position:absolute;left:0px;top:96px;width:76px;height:15px;background:#d2e0f2"></div>
<div style="position:absolute;left:0px;top:111px;width:76px;height:1px;background:#97a8c0"></div>
<div style="position:absolute;left:-262px;width:600px;top:98.45px;line-height:13.79px;font-size:12px;color:#000;text-align:center;white-space:pre;letter-spacing:0.1px">12/24/2009</div>
<div style="position:absolute;left:0px;top:112px;width:76px;height:15px;background:#d2e0f2"></div>
<div style="position:absolute;left:0px;top:127px;width:76px;height:1px;background:#97a8c0"></div>
<div style="position:absolute;left:-262px;width:600px;top:114.45px;line-height:13.79px;font-size:12px;color:#000;text-align:center;white-space:pre;letter-spacing:0.1px">12/28/2009</div>
<div style="position:absolute;left:0px;top:128px;width:76px;height:15px;background:#d2e0f2"></div>
<div style="position:absolute;left:0px;top:143px;width:76px;height:1px;background:#97a8c0"></div>
<div style="position:absolute;left:-262px;width:600px;top:130.45px;line-height:13.79px;font-size:12px;color:#000;text-align:center;white-space:pre;letter-spacing:0.1px">12/29/2009</div>
<div style="position:absolute;left:0px;top:144px;width:76px;height:15px;background:#d2e0f2"></div>
<div style="position:absolute;left:0px;top:159px;width:76px;height:1px;background:#97a8c0"></div>
<div style="position:absolute;left:-262px;width:600px;top:146.45px;line-height:13.79px;font-size:12px;color:#000;text-align:center;white-space:pre;letter-spacing:0.1px">12/30/2009</div>
<div style="position:absolute;left:0px;top:160px;width:76px;height:15px;background:#d2e0f2"></div>
<div style="position:absolute;left:0px;top:175px;width:76px;height:1px;background:#97a8c0"></div>
<div style="position:absolute;left:-262px;width:600px;top:162.45px;line-height:13.79px;font-size:12px;color:#000;text-align:center;white-space:pre;letter-spacing:0.1px">12/31/2009</div>
<div style="position:absolute;left:0px;top:176px;width:76px;height:15px;background:#d2e0f2"></div>
<div style="position:absolute;left:0px;top:191px;width:76px;height:1px;background:#97a8c0"></div>
<div style="position:absolute;left:-262px;width:600px;top:178.45px;line-height:13.79px;font-size:12px;color:#000;text-align:center;white-space:pre;letter-spacing:0.1px">1/04/2010</div>
<div style="position:absolute;left:0px;top:192px;width:76px;height:15px;background:#d2e0f2"></div>
<div style="position:absolute;left:0px;top:207px;width:76px;height:1px;background:#97a8c0"></div>
<div style="position:absolute;left:-262px;width:600px;top:194.45px;line-height:13.79px;font-size:12px;color:#000;text-align:center;white-space:pre;letter-spacing:0.1px">1/05/2010</div>
<div style="position:absolute;left:0px;top:208px;width:76px;height:15px;background:#d2e0f2"></div>
<div style="position:absolute;left:0px;top:223px;width:76px;height:1px;background:#97a8c0"></div>
<div style="position:absolute;left:-262px;width:600px;top:210.45px;line-height:13.79px;font-size:12px;color:#000;text-align:center;white-space:pre;letter-spacing:0.1px">1/06/2010</div>
<div style="position:absolute;left:0px;top:224px;width:76px;height:15px;background:#d2e0f2"></div>
<div style="position:absolute;left:0px;top:239px;width:76px;height:1px;background:#97a8c0"></div>
<div style="position:absolute;left:-262px;width:600px;top:226.45px;line-height:13.79px;font-size:12px;color:#000;text-align:center;white-space:pre;letter-spacing:0.1px">1/07/2010</div>
<div style="position:absolute;left:0px;top:240px;width:76px;height:15px;background:#d2e0f2"></div>
<div style="position:absolute;left:0px;top:255px;width:76px;height:1px;background:#97a8c0"></div>
<div style="position:absolute;left:-262px;width:600px;top:242.45px;line-height:13.79px;font-size:12px;color:#000;text-align:center;white-space:pre;letter-spacing:0.1px">1/08/2010</div>
<div style="position:absolute;left:0px;top:256px;width:76px;height:15px;background:#d2e0f2"></div>
<div style="position:absolute;left:0px;top:271px;width:76px;height:1px;background:#97a8c0"></div>
<div style="position:absolute;left:-262px;width:600px;top:258.45px;line-height:13.79px;font-size:12px;color:#000;text-align:center;white-space:pre;letter-spacing:0.1px">1/11/2010</div>
<div style="position:absolute;left:0px;top:272px;width:76px;height:15px;background:#d2e0f2"></div>
<div style="position:absolute;left:0px;top:287px;width:76px;height:1px;background:#97a8c0"></div>
<div style="position:absolute;left:-262px;width:600px;top:274.45px;line-height:13.79px;font-size:12px;color:#000;text-align:center;white-space:pre;letter-spacing:0.1px">1/12/2010</div>
<div style="position:absolute;left:0px;top:288px;width:76px;height:15px;background:#d2e0f2"></div>
<div style="position:absolute;left:0px;top:303px;width:76px;height:1px;background:#97a8c0"></div>
<div style="position:absolute;left:-262px;width:600px;top:290.45px;line-height:13.79px;font-size:12px;color:#000;text-align:center;white-space:pre;letter-spacing:0.1px">1/13/2010</div>
<div style="position:absolute;left:0px;top:304px;width:76px;height:15px;background:#d2e0f2"></div>
<div style="position:absolute;left:0px;top:319px;width:76px;height:1px;background:#97a8c0"></div>
<div style="position:absolute;left:-262px;width:600px;top:306.45px;line-height:13.79px;font-size:12px;color:#000;text-align:center;white-space:pre;letter-spacing:0.1px">1/14/2010</div>
<div style="position:absolute;left:0px;top:320px;width:76px;height:15px;background:#d2e0f2"></div>
<div style="position:absolute;left:0px;top:335px;width:76px;height:1px;background:#97a8c0"></div>
<div style="position:absolute;left:-262px;width:600px;top:322.45px;line-height:13.79px;font-size:12px;color:#000;text-align:center;white-space:pre;letter-spacing:0.1px">1/15/2010</div>
<div style="position:absolute;left:0px;top:336px;width:76px;height:15px;background:#d2e0f2"></div>
<div style="position:absolute;left:0px;top:351px;width:76px;height:1px;background:#97a8c0"></div>
<div style="position:absolute;left:-262px;width:600px;top:338.45px;line-height:13.79px;font-size:12px;color:#000;text-align:center;white-space:pre;letter-spacing:0.1px">1/18/2010</div>
<div style="position:absolute;left:0px;top:352px;width:76px;height:15px;background:#d2e0f2"></div>
<div style="position:absolute;left:0px;top:367px;width:76px;height:1px;background:#97a8c0"></div>
<div style="position:absolute;left:-262px;width:600px;top:354.45px;line-height:13.79px;font-size:12px;color:#000;text-align:center;white-space:pre;letter-spacing:0.1px">1/19/2010</div>
<div style="position:absolute;left:0px;top:368px;width:76px;height:15px;background:#d2e0f2"></div>
<div style="position:absolute;left:0px;top:383px;width:76px;height:1px;background:#97a8c0"></div>
<div style="position:absolute;left:-262px;width:600px;top:370.45px;line-height:13.79px;font-size:12px;color:#000;text-align:center;white-space:pre;letter-spacing:0.1px">1/20/2010</div>
<div style="position:absolute;left:76px;top:0px;width:1px;height:375px;background:#7e8fa8"></div>
</div>
<div style="position:absolute;left:427px;top:167px;width:378px;height:357px;overflow:hidden;">
<div style="position:absolute;left:0px;top:0px;width:378px;height:357px;background:#fff"></div>
<div style="position:absolute;left:0px;top:15px;width:378px;height:1px;background:#bcc8d8"></div>
<div style="position:absolute;left:-520.0px;width:600px;top:2.45px;line-height:13.79px;font-size:12px;color:#000;text-align:right;white-space:pre;letter-spacing:0.2px">NA</div>
<div style="position:absolute;left:0px;top:31px;width:378px;height:1px;background:#bcc8d8"></div>
<div style="position:absolute;left:-520.0px;width:600px;top:18.45px;line-height:13.79px;font-size:12px;color:#000;text-align:right;white-space:pre;letter-spacing:0.2px">NA</div>
<div style="position:absolute;left:0px;top:47px;width:378px;height:1px;background:#bcc8d8"></div>
<div style="position:absolute;left:-520.0px;width:600px;top:34.45px;line-height:13.79px;font-size:12px;color:#000;text-align:right;white-space:pre;letter-spacing:0.2px">NA</div>
<div style="position:absolute;left:0px;top:63px;width:378px;height:1px;background:#bcc8d8"></div>
<div style="position:absolute;left:-520.0px;width:600px;top:50.45px;line-height:13.79px;font-size:12px;color:#000;text-align:right;white-space:pre;letter-spacing:0.2px">NA</div>
<div style="position:absolute;left:0px;top:79px;width:378px;height:1px;background:#bcc8d8"></div>
<div style="position:absolute;left:-520.0px;width:600px;top:66.45px;line-height:13.79px;font-size:12px;color:#000;text-align:right;white-space:pre;letter-spacing:0.2px">NA</div>
<div style="position:absolute;left:0px;top:95px;width:378px;height:1px;background:#bcc8d8"></div>
<div style="position:absolute;left:-520.0px;width:600px;top:82.45px;line-height:13.79px;font-size:12px;color:#000;text-align:right;white-space:pre;letter-spacing:0.2px">NA</div>
<div style="position:absolute;left:0px;top:111px;width:378px;height:1px;background:#bcc8d8"></div>
<div style="position:absolute;left:-520.0px;width:600px;top:98.45px;line-height:13.79px;font-size:12px;color:#000;text-align:right;white-space:pre;letter-spacing:0.2px">NA</div>
<div style="position:absolute;left:0px;top:127px;width:378px;height:1px;background:#bcc8d8"></div>
<div style="position:absolute;left:-520.0px;width:600px;top:114.45px;line-height:13.79px;font-size:12px;color:#000;text-align:right;white-space:pre;letter-spacing:0.2px">NA</div>
<div style="position:absolute;left:0px;top:143px;width:378px;height:1px;background:#bcc8d8"></div>
<div style="position:absolute;left:-520.0px;width:600px;top:130.45px;line-height:13.79px;font-size:12px;color:#000;text-align:right;white-space:pre;letter-spacing:0.2px">NA</div>
<div style="position:absolute;left:0px;top:159px;width:378px;height:1px;background:#bcc8d8"></div>
<div style="position:absolute;left:-520.0px;width:600px;top:146.45px;line-height:13.79px;font-size:12px;color:#000;text-align:right;white-space:pre;letter-spacing:0.2px">NA</div>
<div style="position:absolute;left:0px;top:175px;width:378px;height:1px;background:#bcc8d8"></div>
<div style="position:absolute;left:-520.0px;width:600px;top:162.45px;line-height:13.79px;font-size:12px;color:#000;text-align:right;white-space:pre;letter-spacing:0.2px">0.041212</div>
<div style="position:absolute;left:0px;top:191px;width:378px;height:1px;background:#bcc8d8"></div>
<div style="position:absolute;left:-520.0px;width:600px;top:178.45px;line-height:13.79px;font-size:12px;color:#000;text-align:right;white-space:pre;letter-spacing:0.2px">0.067379</div>
<div style="position:absolute;left:0px;top:207px;width:378px;height:1px;background:#bcc8d8"></div>
<div style="position:absolute;left:-520.0px;width:600px;top:194.45px;line-height:13.79px;font-size:12px;color:#000;text-align:right;white-space:pre;letter-spacing:0.2px">-0.053196</div>
<div style="position:absolute;left:0px;top:223px;width:378px;height:1px;background:#bcc8d8"></div>
<div style="position:absolute;left:-520.0px;width:600px;top:210.45px;line-height:13.79px;font-size:12px;color:#000;text-align:right;white-space:pre;letter-spacing:0.2px">0.037725</div>
<div style="position:absolute;left:0px;top:239px;width:378px;height:1px;background:#bcc8d8"></div>
<div style="position:absolute;left:-520.0px;width:600px;top:226.45px;line-height:13.79px;font-size:12px;color:#000;text-align:right;white-space:pre;letter-spacing:0.2px">-0.004494</div>
<div style="position:absolute;left:0px;top:255px;width:378px;height:1px;background:#bcc8d8"></div>
<div style="position:absolute;left:-520.0px;width:600px;top:242.45px;line-height:13.79px;font-size:12px;color:#000;text-align:right;white-space:pre;letter-spacing:0.2px">0.081387</div>
<div style="position:absolute;left:0px;top:271px;width:378px;height:1px;background:#bcc8d8"></div>
<div style="position:absolute;left:-520.0px;width:600px;top:258.45px;line-height:13.79px;font-size:12px;color:#000;text-align:right;white-space:pre;letter-spacing:0.2px">0.069195</div>
<div style="position:absolute;left:0px;top:287px;width:378px;height:1px;background:#bcc8d8"></div>
<div style="position:absolute;left:-520.0px;width:600px;top:274.45px;line-height:13.79px;font-size:12px;color:#000;text-align:right;white-space:pre;letter-spacing:0.2px">0.082538</div>
<div style="position:absolute;left:0px;top:303px;width:378px;height:1px;background:#bcc8d8"></div>
<div style="position:absolute;left:-520.0px;width:600px;top:290.45px;line-height:13.79px;font-size:12px;color:#000;text-align:right;white-space:pre;letter-spacing:0.2px">0.148706</div>
<div style="position:absolute;left:0px;top:319px;width:378px;height:1px;background:#bcc8d8"></div>
<div style="position:absolute;left:-520.0px;width:600px;top:306.45px;line-height:13.79px;font-size:12px;color:#000;text-align:right;white-space:pre;letter-spacing:0.2px">0.114285</div>
<div style="position:absolute;left:0px;top:335px;width:378px;height:1px;background:#bcc8d8"></div>
<div style="position:absolute;left:-520.0px;width:600px;top:322.45px;line-height:13.79px;font-size:12px;color:#000;text-align:right;white-space:pre;letter-spacing:0.2px">0.088147</div>
<div style="position:absolute;left:0px;top:351px;width:378px;height:1px;background:#bcc8d8"></div>
<div style="position:absolute;left:-520.0px;width:600px;top:338.45px;line-height:13.79px;font-size:12px;color:#000;text-align:right;white-space:pre;letter-spacing:0.2px">0.100159</div>
<div style="position:absolute;left:0px;top:367px;width:378px;height:1px;background:#bcc8d8"></div>
<div style="position:absolute;left:-520.0px;width:600px;top:354.45px;line-height:13.79px;font-size:12px;color:#000;text-align:right;white-space:pre;letter-spacing:0.2px">0.092590</div>
<div style="position:absolute;left:83px;top:0px;width:1px;height:357px;background:#bcc8d8"></div>
<div style="position:absolute;left:167px;top:0px;width:1px;height:357px;background:#bcc8d8"></div>
<div style="position:absolute;left:251px;top:0px;width:1px;height:357px;background:#bcc8d8"></div>
<div style="position:absolute;left:335px;top:0px;width:1px;height:357px;background:#bcc8d8"></div>
<div style="position:absolute;left:419px;top:0px;width:1px;height:357px;background:#bcc8d8"></div>
</div>
<div style="position:absolute;left:805px;top:167px;width:17px;height:357px;background:#f0f0f0"></div>
<svg style="position:absolute;left:809px;top:173px" width="9" height="6" viewBox="0 0 9 6"><polyline points="1,5 4.5,1.5 8,5" fill="none" stroke="#555" stroke-width="2"/></svg>
<svg style="position:absolute;left:809px;top:511px" width="9" height="6" viewBox="0 0 9 6"><polyline points="1,1 4.5,4.5 8,1" fill="none" stroke="#555" stroke-width="2"/></svg>
<div style="position:absolute;left:806px;top:419px;width:15px;height:17px;background:#cdcdcd"></div>
<div style="position:absolute;left:427px;top:524px;width:395px;height:18px;background:#f0f0f0"></div>
<svg style="position:absolute;left:431px;top:529px" width="6" height="9" viewBox="0 0 6 9"><polyline points="5,1 1.5,4.5 5,8" fill="none" stroke="#555" stroke-width="2"/></svg>
<svg style="position:absolute;left:794px;top:529px" width="6" height="9" viewBox="0 0 6 9"><polyline points="1,1 4.5,4.5 1,8" fill="none" stroke="#555" stroke-width="2"/></svg>
<div style="position:absolute;left:616px;top:525px;width:172px;height:15px;background:#cdcdcd"></div>
<div style="position:absolute;left:818px;top:531px;width:2px;height:2px;background:#b8b8b8"></div>
<div style="position:absolute;left:815px;top:534px;width:2px;height:2px;background:#b8b8b8"></div>
<div style="position:absolute;left:818px;top:534px;width:2px;height:2px;background:#b8b8b8"></div>
<div style="position:absolute;left:812px;top:537px;width:2px;height:2px;background:#b8b8b8"></div>
<div style="position:absolute;left:815px;top:537px;width:2px;height:2px;background:#b8b8b8"></div>
<div style="position:absolute;left:818px;top:537px;width:2px;height:2px;background:#b8b8b8"></div>
<div style="position:absolute;left:827px;top:80px;width:488px;height:472px;box-sizing:border-box;border:1px solid #000;border-radius:6px 6px 0 0;background:linear-gradient(#c0cee2 0px,#d4dfee 18px,#e2eaf5 30px,#e3ebf6 100%);overflow:hidden"></div>
<svg style="position:absolute;left:838px;top:88px" width="17" height="14" viewBox="0 0 15 12"><path d="M1.5 0.5H13.5M14.5 1.5V10.5M13.5 11.5H1.5M0.5 10.5V1.5" stroke="#000" stroke-width="1.15" fill="none"/><rect x="1" y="1" width="13" height="10" fill="#faea9c"/><polyline points="0.8,4 5.5,9.3 11.4,2.3 14.3,5.2" fill="none" stroke="#000" stroke-width="1.3"/></svg>
<div style="position:absolute;left:828px;top:81px;width:418px;height:29px;overflow:hidden;">
<div style="position:absolute;left:32px;top:8.11px;line-height:16.09px;font-size:14px;color:#1a2230;white-space:pre;">Series: FCAST   Workfile: BRENT-B1_ICE::Untitled\</div>
</div>
<div style="position:absolute;left:1252.5px;top:97.8px;width:7.5px;height:2.2px;background:#3d5577"></div>
<div style="position:absolute;left:1272px;top:92px;width:9px;height:8px;box-sizing:border-box;border:1.3px solid #3d5577;border-top-width:2.6px"></div>
<svg style="position:absolute;left:1292px;top:92px" width="10" height="9" viewBox="0 0 10 9"><path d="M1 0.5L9 8.5M9 0.5L1 8.5" stroke="#3d5577" stroke-width="2.2"/></svg>
<div style="position:absolute;left:835px;top:111px;width:472px;height:22px;overflow:hidden;">
<div style="position:absolute;left:0px;top:0px;width:472px;height:22px;background:#bfcbdc;border-top:1px solid #50627e;border-bottom:1px solid #50627e;box-sizing:border-box"></div><div style="position:absolute;left:1px;top:0px;width:31px;height:22px;box-sizing:border-box;border:1px solid #50627e;border-radius:2px;background:linear-gradient(#f7f9fd,#e3eaf4 50%,#c8d5e7);"></div><div style="position:absolute;left:-283.5px;width:600px;top:5.37px;line-height:12.64px;font-size:11px;color:#111;text-align:center;white-space:pre;">View</div><div style="position:absolute;left:31px;top:0px;width:31px;height:22px;box-sizing:border-box;border:1px solid #50627e;border-radius:2px;background:linear-gradient(#f7f9fd,#e3eaf4 50%,#c8d5e7);"></div><div style="position:absolute;left:-253.5px;width:600px;top:5.37px;line-height:12.64px;font-size:11px;color:#111;text-align:center;white-space:pre;">Proc</div><div style="position:absolute;left:61px;top:0px;width:42px;height:22px;box-sizing:border-box;border:1px solid #50627e;border-radius:2px;background:linear-gradient(#f7f9fd,#e3eaf4 50%,#c8d5e7);"></div><div style="position:absolute;left:-218.0px;width:600px;top:5.37px;line-height:12.64px;font-size:11px;color:#111;text-align:center;white-space:pre;">Object</div><div style="position:absolute;left:102px;top:0px;width:60px;height:22px;box-sizing:border-box;border:1px solid #50627e;border-radius:2px;background:linear-gradient(#f7f9fd,#e3eaf4 50%,#c8d5e7);"></div><div style="position:absolute;left:-168.0px;width:600px;top:5.37px;line-height:12.64px;font-size:11px;color:#111;text-align:center;white-space:pre;">Properties</div><div style="position:absolute;left:162px;top:1px;width:7px;height:20px;background:#bccadb"></div><div style="position:absolute;left:168px;top:0px;width:32px;height:22px;box-sizing:border-box;border:1px solid #50627e;border-radius:2px;background:linear-gradient(#f7f9fd,#e3eaf4 50%,#c8d5e7);"></div><div style="position:absolute;left:-116.0px;width:600px;top:5.37px;line-height:12.64px;font-size:11px;color:#111;text-align:center;white-space:pre;">Print</div><div style="position:absolute;left:199px;top:0px;width:37px;height:22px;box-sizing:border-box;border:1px solid #50627e;border-radius:2px;background:linear-gradient(#f7f9fd,#e3eaf4 50%,#c8d5e7);"></div><div style="position:absolute;left:-82.5px;width:600px;top:5.37px;line-height:12.64px;font-size:11px;color:#111;text-align:center;white-space:pre;">Name</div><div style="position:absolute;left:235px;top:0px;width:41px;height:22px;box-sizing:border-box;border:1px solid #50627e;border-radius:2px;background:linear-gradient(#f7f9fd,#e3eaf4 50%,#c8d5e7);"></div><div style="position:absolute;left:-44.5px;width:600px;top:5.37px;line-height:12.64px;font-size:11px;color:#111;text-align:center;white-space:pre;">Freeze</div><div style="position:absolute;left:276px;top:1px;width:6px;height:20px;background:#bccadb"></div><div style="position:absolute;left:360px;top:1px;width:8px;height:20px;background:#bccadb"></div><div style="position:absolute;left:367px;top:0px;width:29px;height:22px;box-sizing:border-box;border:1px solid #50627e;border-radius:2px;background:linear-gradient(#f7f9fd,#e3eaf4 50%,#c8d5e7);"></div><div style="position:absolute;left:81.5px;width:600px;top:5.37px;line-height:12.64px;font-size:11px;color:#111;text-align:center;white-space:pre;">Sort</div><div style="position:absolute;left:395px;top:0px;width:44px;height:22px;box-sizing:border-box;border:1px solid #50627e;border-radius:2px;background:linear-gradient(#f7f9fd,#e3eaf4 50%,#c8d5e7);"></div><div style="position:absolute;left:117.0px;width:600px;top:5.37px;line-height:12.64px;font-size:11px;color:#111;text-align:center;white-space:pre;">Edit+/-</div><div style="position:absolute;left:438px;top:0px;width:47px;height:22px;box-sizing:border-box;border:1px solid #50627e;border-radius:2px;background:linear-gradient(#f7f9fd,#e3eaf4 50%,#c8d5e7);"></div><div style="position:absolute;left:161.5px;width:600px;top:5.37px;line-height:12.64px;font-size:11px;color:#111;text-align:center;white-space:pre;">Smpl+/-</div><div style="position:absolute;left:282px;top:1px;width:78px;height:20px;box-sizing:border-box;border:1px solid #b8b8b8;background:linear-gradient(#f4f4f4,#e4e4e4);"></div><div style="position:absolute;left:286px;top:5.37px;line-height:12.64px;font-size:11px;color:#111;white-space:pre;">Default</div><svg style="position:absolute;left:348px;top:8px" width="8" height="6" viewBox="0 0 8 6"><polyline points="0.5,1 4,4.5 7.5,1" fill="none" stroke="#333" stroke-width="1.4"/></svg>
</div>
<div style="position:absolute;left:835px;top:133px;width:472px;height:21px;background:linear-gradient(#e6eef8,#c3d6ef)"></div>
<div style="position:absolute;left:771px;width:600px;top:137.87px;line-height:12.64px;font-size:11px;color:#2a3a52;text-align:center;white-space:pre;font-weight:bold;letter-spacing:0.2px">FCAST</div>
<div style="position:absolute;left:835px;top:153px;width:472px;height:1px;background:#9aaac2"></div>
<div style="position:absolute;left:835px;top:154px;width:472px;height:16px;background:linear-gradient(#dfe9f6,#c6d8f0)"></div>
<div style="position:absolute;left:912px;top:154px;width:83px;height:16px;background:linear-gradient(#c7daf3,#a5c2ea)"></div>
<div style="position:absolute;left:911px;top:154px;width:1px;height:16px;background:#8e9fb8"></div>
<div style="position:absolute;left:995px;top:154px;width:1px;height:16px;background:#8e9fb8"></div>
<div style="position:absolute;left:1079px;top:154px;width:1px;height:16px;background:#8e9fb8"></div>
<div style="position:absolute;left:1163px;top:154px;width:1px;height:16px;background:#8e9fb8"></div>
<div style="position:absolute;left:1247px;top:154px;width:1px;height:16px;background:#8e9fb8"></div>
<div style="position:absolute;left:835px;top:169px;width:472px;height:1px;background:#6f809c"></div>
<div style="position:absolute;left:835px;top:170px;width:455px;height:375px;overflow:hidden;">
<div style="position:absolute;left:0px;top:0px;width:76px;height:375px;background:#e3ebf6"></div>
<div style="position:absolute;left:0px;top:0px;width:76px;height:15px;background:#d2e0f2"></div>
<div style="position:absolute;left:0px;top:15px;width:76px;height:1px;background:#97a8c0"></div>
<div style="position:absolute;left:-262px;width:600px;top:2.45px;line-height:13.79px;font-size:12px;color:#000;text-align:center;white-space:pre;letter-spacing:0.1px">12/16/2009</div>
<div style="position:absolute;left:0px;top:16px;width:76px;height:15px;background:#d2e0f2"></div>
<div style="position:absolute;left:0px;top:31px;width:76px;height:1px;background:#97a8c0"></div>
<div style="position:absolute;left:-262px;width:600px;top:18.45px;line-height:13.79px;font-size:12px;color:#000;text-align:center;white-space:pre;letter-spacing:0.1px">12/17/2009</div>
<div style="position:absolute;left:0px;top:32px;width:76px;height:15px;background:#d2e0f2"></div>
<div style="position:absolute;left:0px;top:47px;width:76px;height:1px;background:#97a8c0"></div>
<div style="position:absolute;left:-262px;width:600px;top:34.45px;line-height:13.79px;font-size:12px;color:#000;text-align:center;white-space:pre;letter-spacing:0.1px">12/18/2009</div>
<div style="position:absolute;left:0px;top:48px;width:76px;height:15px;background:#d2e0f2"></div>
<div style="position:absolute;left:0px;top:63px;width:76px;height:1px;background:#97a8c0"></div>
<div style="position:absolute;left:-262px;width:600px;top:50.45px;line-height:13.79px;font-size:12px;color:#000;text-align:center;white-space:pre;letter-spacing:0.1px">12/21/2009</div>
<div style="position:absolute;left:0px;top:64px;width:76px;height:15px;background:#d2e0f2"></div>
<div style="position:absolute;left:0px;top:79px;width:76px;height:1px;background:#97a8c0"></div>
<div style="position:absolute;left:-262px;width:600px;top:66.45px;line-height:13.79px;font-size:12px;color:#000;text-align:center;white-space:pre;letter-spacing:0.1px">12/22/2009</div>
<div style="position:absolute;left:0px;top:80px;width:76px;height:15px;background:#d2e0f2"></div>
<div style="position:absolute;left:0px;top:95px;width:76px;height:1px;background:#97a8c0"></div>
<div style="position:absolute;left:-262px;width:600px;top:82.45px;line-height:13.79px;font-size:12px;color:#000;text-align:center;white-space:pre;letter-spacing:0.1px">12/23/2009</div>
<div style="position:absolute;left:0px;top:96px;width:76px;height:15px;background:#d2e0f2"></div>
<div style="position:absolute;left:0px;top:111px;width:76px;height:1px;background:#97a8c0"></div>
<div style="position:absolute;left:-262px;width:600px;top:98.45px;line-height:13.79px;font-size:12px;color:#000;text-align:center;white-space:pre;letter-spacing:0.1px">12/24/2009</div>
<div style="position:absolute;left:0px;top:112px;width:76px;height:15px;background:#d2e0f2"></div>
<div style="position:absolute;left:0px;top:127px;width:76px;height:1px;background:#97a8c0"></div>
<div style="position:absolute;left:-262px;width:600px;top:114.45px;line-height:13.79px;font-size:12px;color:#000;text-align:center;white-space:pre;letter-spacing:0.1px">12/28/2009</div>
<div style="position:absolute;left:0px;top:128px;width:76px;height:15px;background:#d2e0f2"></div>
<div style="position:absolute;left:0px;top:143px;width:76px;height:1px;background:#97a8c0"></div>
<div style="position:absolute;left:-262px;width:600px;top:130.45px;line-height:13.79px;font-size:12px;color:#000;text-align:center;white-space:pre;letter-spacing:0.1px">12/29/2009</div>
<div style="position:absolute;left:0px;top:144px;width:76px;height:15px;background:#d2e0f2"></div>
<div style="position:absolute;left:0px;top:159px;width:76px;height:1px;background:#97a8c0"></div>
<div style="position:absolute;left:-262px;width:600px;top:146.45px;line-height:13.79px;font-size:12px;color:#000;text-align:center;white-space:pre;letter-spacing:0.1px">12/30/2009</div>
<div style="position:absolute;left:0px;top:160px;width:76px;height:15px;background:#d2e0f2"></div>
<div style="position:absolute;left:0px;top:175px;width:76px;height:1px;background:#97a8c0"></div>
<div style="position:absolute;left:-262px;width:600px;top:162.45px;line-height:13.79px;font-size:12px;color:#000;text-align:center;white-space:pre;letter-spacing:0.1px">12/31/2009</div>
<div style="position:absolute;left:0px;top:176px;width:76px;height:15px;background:#d2e0f2"></div>
<div style="position:absolute;left:0px;top:191px;width:76px;height:1px;background:#97a8c0"></div>
<div style="position:absolute;left:-262px;width:600px;top:178.45px;line-height:13.79px;font-size:12px;color:#000;text-align:center;white-space:pre;letter-spacing:0.1px">1/04/2010</div>
<div style="position:absolute;left:0px;top:192px;width:76px;height:15px;background:#d2e0f2"></div>
<div style="position:absolute;left:0px;top:207px;width:76px;height:1px;background:#97a8c0"></div>
<div style="position:absolute;left:-262px;width:600px;top:194.45px;line-height:13.79px;font-size:12px;color:#000;text-align:center;white-space:pre;letter-spacing:0.1px">1/05/2010</div>
<div style="position:absolute;left:0px;top:208px;width:76px;height:15px;background:#d2e0f2"></div>
<div style="position:absolute;left:0px;top:223px;width:76px;height:1px;background:#97a8c0"></div>
<div style="position:absolute;left:-262px;width:600px;top:210.45px;line-height:13.79px;font-size:12px;color:#000;text-align:center;white-space:pre;letter-spacing:0.1px">1/06/2010</div>
<div style="position:absolute;left:0px;top:224px;width:76px;height:15px;background:#d2e0f2"></div>
<div style="position:absolute;left:0px;top:239px;width:76px;height:1px;background:#97a8c0"></div>
<div style="position:absolute;left:-262px;width:600px;top:226.45px;line-height:13.79px;font-size:12px;color:#000;text-align:center;white-space:pre;letter-spacing:0.1px">1/07/2010</div>
<div style="position:absolute;left:0px;top:240px;width:76px;height:15px;background:#d2e0f2"></div>
<div style="position:absolute;left:0px;top:255px;width:76px;height:1px;background:#97a8c0"></div>
<div style="position:absolute;left:-262px;width:600px;top:242.45px;line-height:13.79px;font-size:12px;color:#000;text-align:center;white-space:pre;letter-spacing:0.1px">1/08/2010</div>
<div style="position:absolute;left:0px;top:256px;width:76px;height:15px;background:#a8c4ec"></div>
<div style="position:absolute;left:0px;top:271px;width:76px;height:1px;background:#97a8c0"></div>
<div style="position:absolute;left:-262px;width:600px;top:258.45px;line-height:13.79px;font-size:12px;color:#000;text-align:center;white-space:pre;letter-spacing:0.1px">1/11/2010</div>
<div style="position:absolute;left:0px;top:272px;width:76px;height:15px;background:#d2e0f2"></div>
<div style="position:absolute;left:0px;top:287px;width:76px;height:1px;background:#97a8c0"></div>
<div style="position:absolute;left:-262px;width:600px;top:274.45px;line-height:13.79px;font-size:12px;color:#000;text-align:center;white-space:pre;letter-spacing:0.1px">1/12/2010</div>
<div style="position:absolute;left:0px;top:288px;width:76px;height:15px;background:#d2e0f2"></div>
<div style="position:absolute;left:0px;top:303px;width:76px;height:1px;background:#97a8c0"></div>
<div style="position:absolute;left:-262px;width:600px;top:290.45px;line-height:13.79px;font-size:12px;color:#000;text-align:center;white-space:pre;letter-spacing:0.1px">1/13/2010</div>
<div style="position:absolute;left:0px;top:304px;width:76px;height:15px;background:#d2e0f2"></div>
<div style="position:absolute;left:0px;top:319px;width:76px;height:1px;background:#97a8c0"></div>
<div style="position:absolute;left:-262px;width:600px;top:306.45px;line-height:13.79px;font-size:12px;color:#000;text-align:center;white-space:pre;letter-spacing:0.1px">1/14/2010</div>
<div style="position:absolute;left:0px;top:320px;width:76px;height:15px;background:#d2e0f2"></div>
<div style="position:absolute;left:0px;top:335px;width:76px;height:1px;background:#97a8c0"></div>
<div style="position:absolute;left:-262px;width:600px;top:322.45px;line-height:13.79px;font-size:12px;color:#000;text-align:center;white-space:pre;letter-spacing:0.1px">1/15/2010</div>
<div style="position:absolute;left:0px;top:336px;width:76px;height:15px;background:#d2e0f2"></div>
<div style="position:absolute;left:0px;top:351px;width:76px;height:1px;background:#97a8c0"></div>
<div style="position:absolute;left:-262px;width:600px;top:338.45px;line-height:13.79px;font-size:12px;color:#000;text-align:center;white-space:pre;letter-spacing:0.1px">1/18/2010</div>
<div style="position:absolute;left:0px;top:352px;width:76px;height:15px;background:#d2e0f2"></div>
<div style="position:absolute;left:0px;top:367px;width:76px;height:1px;background:#97a8c0"></div>
<div style="position:absolute;left:-262px;width:600px;top:354.45px;line-height:13.79px;font-size:12px;color:#000;text-align:center;white-space:pre;letter-spacing:0.1px">1/19/2010</div>
<div style="position:absolute;left:0px;top:368px;width:76px;height:15px;background:#d2e0f2"></div>
<div style="position:absolute;left:0px;top:383px;width:76px;height:1px;background:#97a8c0"></div>
<div style="position:absolute;left:-262px;width:600px;top:370.45px;line-height:13.79px;font-size:12px;color:#000;text-align:center;white-space:pre;letter-spacing:0.1px">1/20/2010</div>
<div style="position:absolute;left:76px;top:0px;width:1px;height:375px;background:#7e8fa8"></div>
</div>
<div style="position:absolute;left:912px;top:170px;width:378px;height:357px;overflow:hidden;">
<div style="position:absolute;left:0px;top:0px;width:378px;height:357px;background:#fff"></div>
<div style="position:absolute;left:0px;top:15px;width:378px;height:1px;background:#bcc8d8"></div>
<div style="position:absolute;left:-520.0px;width:600px;top:2.45px;line-height:13.79px;font-size:12px;color:#000;text-align:right;white-space:pre;letter-spacing:0.2px">NA</div>
<div style="position:absolute;left:0px;top:31px;width:378px;height:1px;background:#bcc8d8"></div>
<div style="position:absolute;left:-520.0px;width:600px;top:18.45px;line-height:13.79px;font-size:12px;color:#000;text-align:right;white-space:pre;letter-spacing:0.2px">NA</div>
<div style="position:absolute;left:0px;top:47px;width:378px;height:1px;background:#bcc8d8"></div>
<div style="position:absolute;left:-520.0px;width:600px;top:34.45px;line-height:13.79px;font-size:12px;color:#000;text-align:right;white-space:pre;letter-spacing:0.2px">NA</div>
<div style="position:absolute;left:0px;top:63px;width:378px;height:1px;background:#bcc8d8"></div>
<div style="position:absolute;left:-520.0px;width:600px;top:50.45px;line-height:13.79px;font-size:12px;color:#000;text-align:right;white-space:pre;letter-spacing:0.2px">NA</div>
<div style="position:absolute;left:0px;top:79px;width:378px;height:1px;background:#bcc8d8"></div>
<div style="position:absolute;left:-520.0px;width:600px;top:66.45px;line-height:13.79px;font-size:12px;color:#000;text-align:right;white-space:pre;letter-spacing:0.2px">NA</div>
<div style="position:absolute;left:0px;top:95px;width:378px;height:1px;background:#bcc8d8"></div>
<div style="position:absolute;left:-520.0px;width:600px;top:82.45px;line-height:13.79px;font-size:12px;color:#000;text-align:right;white-space:pre;letter-spacing:0.2px">NA</div>
<div style="position:absolute;left:0px;top:111px;width:378px;height:1px;background:#bcc8d8"></div>
<div style="position:absolute;left:-520.0px;width:600px;top:98.45px;line-height:13.79px;font-size:12px;color:#000;text-align:right;white-space:pre;letter-spacing:0.2px">NA</div>
<div style="position:absolute;left:0px;top:127px;width:378px;height:1px;background:#bcc8d8"></div>
<div style="position:absolute;left:-520.0px;width:600px;top:114.45px;line-height:13.79px;font-size:12px;color:#000;text-align:right;white-space:pre;letter-spacing:0.2px">NA</div>
<div style="position:absolute;left:0px;top:143px;width:378px;height:1px;background:#bcc8d8"></div>
<div style="position:absolute;left:-520.0px;width:600px;top:130.45px;line-height:13.79px;font-size:12px;color:#000;text-align:right;white-space:pre;letter-spacing:0.2px">NA</div>
<div style="position:absolute;left:0px;top:159px;width:378px;height:1px;background:#bcc8d8"></div>
<div style="position:absolute;left:-520.0px;width:600px;top:146.45px;line-height:13.79px;font-size:12px;color:#000;text-align:right;white-space:pre;letter-spacing:0.2px">NA</div>
<div style="position:absolute;left:0px;top:175px;width:378px;height:1px;background:#bcc8d8"></div>
<div style="position:absolute;left:-520.0px;width:600px;top:162.45px;line-height:13.79px;font-size:12px;color:#000;text-align:right;white-space:pre;letter-spacing:0.2px">0.052085</div>
<div style="position:absolute;left:0px;top:191px;width:378px;height:1px;background:#bcc8d8"></div>
<div style="position:absolute;left:-520.0px;width:600px;top:178.45px;line-height:13.79px;font-size:12px;color:#000;text-align:right;white-space:pre;letter-spacing:0.2px">0.073643</div>
<div style="position:absolute;left:0px;top:207px;width:378px;height:1px;background:#bcc8d8"></div>
<div style="position:absolute;left:-520.0px;width:600px;top:194.45px;line-height:13.79px;font-size:12px;color:#000;text-align:right;white-space:pre;letter-spacing:0.2px">-0.025691</div>
<div style="position:absolute;left:0px;top:223px;width:378px;height:1px;background:#bcc8d8"></div>
<div style="position:absolute;left:-520.0px;width:600px;top:210.45px;line-height:13.79px;font-size:12px;color:#000;text-align:right;white-space:pre;letter-spacing:0.2px">0.049213</div>
<div style="position:absolute;left:0px;top:239px;width:378px;height:1px;background:#bcc8d8"></div>
<div style="position:absolute;left:-520.0px;width:600px;top:226.45px;line-height:13.79px;font-size:12px;color:#000;text-align:right;white-space:pre;letter-spacing:0.2px">0.014431</div>
<div style="position:absolute;left:0px;top:255px;width:378px;height:1px;background:#bcc8d8"></div>
<div style="position:absolute;left:-520.0px;width:600px;top:242.45px;line-height:13.79px;font-size:12px;color:#000;text-align:right;white-space:pre;letter-spacing:0.2px">0.085184</div>
<div style="position:absolute;left:0px;top:256px;width:83px;height:15px;background:#dce9fa"></div>
<div style="position:absolute;left:0px;top:271px;width:378px;height:1px;background:#bcc8d8"></div>
<div style="position:absolute;left:-520.0px;width:600px;top:258.45px;line-height:13.79px;font-size:12px;color:#000;text-align:right;white-space:pre;letter-spacing:0.2px">0.075139</div>
<div style="position:absolute;left:0px;top:287px;width:378px;height:1px;background:#bcc8d8"></div>
<div style="position:absolute;left:-520.0px;width:600px;top:274.45px;line-height:13.79px;font-size:12px;color:#000;text-align:right;white-space:pre;letter-spacing:0.2px">0.086132</div>
<div style="position:absolute;left:0px;top:303px;width:378px;height:1px;background:#bcc8d8"></div>
<div style="position:absolute;left:-520.0px;width:600px;top:290.45px;line-height:13.79px;font-size:12px;color:#000;text-align:right;white-space:pre;letter-spacing:0.2px">0.140644</div>
<div style="position:absolute;left:0px;top:319px;width:378px;height:1px;background:#bcc8d8"></div>
<div style="position:absolute;left:-520.0px;width:600px;top:306.45px;line-height:13.79px;font-size:12px;color:#000;text-align:right;white-space:pre;letter-spacing:0.2px">0.112287</div>
<div style="position:absolute;left:0px;top:335px;width:378px;height:1px;background:#bcc8d8"></div>
<div style="position:absolute;left:-520.0px;width:600px;top:322.45px;line-height:13.79px;font-size:12px;color:#000;text-align:right;white-space:pre;letter-spacing:0.2px">0.090753</div>
<div style="position:absolute;left:0px;top:351px;width:378px;height:1px;background:#bcc8d8"></div>
<div style="position:absolute;left:-520.0px;width:600px;top:338.45px;line-height:13.79px;font-size:12px;color:#000;text-align:right;white-space:pre;letter-spacing:0.2px">0.100648</div>
<div style="position:absolute;left:0px;top:367px;width:378px;height:1px;background:#bcc8d8"></div>
<div style="position:absolute;left:-520.0px;width:600px;top:354.45px;line-height:13.79px;font-size:12px;color:#000;text-align:right;white-space:pre;letter-spacing:0.2px">0.090605</div>
<div style="position:absolute;left:83px;top:0px;width:1px;height:357px;background:#bcc8d8"></div>
<div style="position:absolute;left:167px;top:0px;width:1px;height:357px;background:#bcc8d8"></div>
<div style="position:absolute;left:251px;top:0px;width:1px;height:357px;background:#bcc8d8"></div>
<div style="position:absolute;left:335px;top:0px;width:1px;height:357px;background:#bcc8d8"></div>
<div style="position:absolute;left:419px;top:0px;width:1px;height:357px;background:#bcc8d8"></div>
</div>
<div style="position:absolute;left:1290px;top:170px;width:17px;height:357px;background:#f0f0f0"></div>
<svg style="position:absolute;left:1294px;top:176px" width="9" height="6" viewBox="0 0 9 6"><polyline points="1,5 4.5,1.5 8,5" fill="none" stroke="#555" stroke-width="2"/></svg>
<svg style="position:absolute;left:1294px;top:514px" width="9" height="6" viewBox="0 0 9 6"><polyline points="1,1 4.5,4.5 8,1" fill="none" stroke="#555" stroke-width="2"/></svg>
<div style="position:absolute;left:1291px;top:422px;width:15px;height:17px;background:#cdcdcd"></div>
<div style="position:absolute;left:912px;top:527px;width:395px;height:18px;background:#f0f0f0"></div>
<svg style="position:absolute;left:916px;top:532px" width="6" height="9" viewBox="0 0 6 9"><polyline points="5,1 1.5,4.5 5,8" fill="none" stroke="#555" stroke-width="2"/></svg>
<svg style="position:absolute;left:1279px;top:532px" width="6" height="9" viewBox="0 0 6 9"><polyline points="1,1 4.5,4.5 1,8" fill="none" stroke="#555" stroke-width="2"/></svg>
<div style="position:absolute;left:1101px;top:528px;width:172px;height:15px;background:#cdcdcd"></div>
<div style="position:absolute;left:1303px;top:534px;width:2px;height:2px;background:#b8b8b8"></div>
<div style="position:absolute;left:1300px;top:537px;width:2px;height:2px;background:#b8b8b8"></div>
<div style="position:absolute;left:1303px;top:537px;width:2px;height:2px;background:#b8b8b8"></div>
<div style="position:absolute;left:1297px;top:540px;width:2px;height:2px;background:#b8b8b8"></div>
<div style="position:absolute;left:1300px;top:540px;width:2px;height:2px;background:#b8b8b8"></div>
<div style="position:absolute;left:1303px;top:540px;width:2px;height:2px;background:#b8b8b8"></div>
<div style="position:absolute;left:12px;top:132px;width:1906px;height:871px;overflow:hidden;">
<div style="position:absolute;left:324px;top:421px;width:465px;height:480px;box-sizing:border-box;border:1px solid #000;border-radius:6px 6px 0 0;background:linear-gradient(#a0b9d9 0px,#b9cce6 18px,#d0ddef 30px,#c9daf0 100%)"></div>
</div>
<div style="position:absolute;left:346px;top:560px;width:17px;height:15px;box-sizing:border-box;border:1.5px solid #000;border-radius:3px;background:#c8dbf3"></div>
<div style="position:absolute;left:350px;top:565px;width:9px;height:2px;background:#000"></div>
<div style="position:absolute;left:350px;top:569px;width:9px;height:2px;background:#000"></div>
<div style="position:absolute;left:368px;top:562.11px;line-height:16.09px;font-size:14px;color:#1a2230;white-space:pre;">Equation: UNTITLED   Workfile: BRENT-B1_ICE::Untitle...</div>
<div style="position:absolute;left:739.5px;top:570.8px;width:7.5px;height:2.2px;background:#3d5577"></div>
<div style="position:absolute;left:759px;top:565px;width:9px;height:8px;box-sizing:border-box;border:1.3px solid #3d5577;border-top-width:2.6px"></div>
<svg style="position:absolute;left:778px;top:565px" width="10" height="9" viewBox="0 0 10 9"><path d="M1 0.5L9 8.5M9 0.5L1 8.5" stroke="#3d5577" stroke-width="2.2"/></svg>
<div style="position:absolute;left:343px;top:584px;width:451px;height:22px;background:#bfcbdc;border-top:1px solid #50627e;border-bottom:1px solid #50627e;box-sizing:border-box"></div>
<div style="position:absolute;left:344px;top:584px;width:32px;height:22px;box-sizing:border-box;border:1px solid #50627e;border-radius:2px;background:linear-gradient(#f7f9fd,#e3eaf4 50%,#c8d5e7);"></div>
<div style="position:absolute;left:60.0px;width:600px;top:589.37px;line-height:12.64px;font-size:11px;color:#111;text-align:center;white-space:pre;">View</div>
<div style="position:absolute;left:375px;top:584px;width:30px;height:22px;box-sizing:border-box;border:1px solid #50627e;border-radius:2px;background:linear-gradient(#f7f9fd,#e3eaf4 50%,#c8d5e7);"></div>
<div style="position:absolute;left:90.0px;width:600px;top:589.37px;line-height:12.64px;font-size:11px;color:#111;text-align:center;white-space:pre;">Proc</div>
<div style="position:absolute;left:404px;top:584px;width:42px;height:22px;box-sizing:border-box;border:1px solid #50627e;border-radius:2px;background:linear-gradient(#f7f9fd,#e3eaf4 50%,#c8d5e7);"></div>
<div style="position:absolute;left:125.0px;width:600px;top:589.37px;line-height:12.64px;font-size:11px;color:#111;text-align:center;white-space:pre;">Object</div>
<div style="position:absolute;left:446px;top:585px;width:7px;height:20px;background:#bccadb"></div>
<div style="position:absolute;left:452px;top:584px;width:32px;height:22px;box-sizing:border-box;border:1px solid #50627e;border-radius:2px;background:linear-gradient(#f7f9fd,#e3eaf4 50%,#c8d5e7);"></div>
<div style="position:absolute;left:168.0px;width:600px;top:589.37px;line-height:12.64px;font-size:11px;color:#111;text-align:center;white-space:pre;">Print</div>
<div style="position:absolute;left:483px;top:584px;width:37px;height:22px;box-sizing:border-box;border:1px solid #50627e;border-radius:2px;background:linear-gradient(#f7f9fd,#e3eaf4 50%,#c8d5e7);"></div>
<div style="position:absolute;left:201.5px;width:600px;top:589.37px;line-height:12.64px;font-size:11px;color:#111;text-align:center;white-space:pre;">Name</div>
<div style="position:absolute;left:519px;top:584px;width:41px;height:22px;box-sizing:border-box;border:1px solid #50627e;border-radius:2px;background:linear-gradient(#f7f9fd,#e3eaf4 50%,#c8d5e7);"></div>
<div style="position:absolute;left:239.5px;width:600px;top:589.37px;line-height:12.64px;font-size:11px;color:#111;text-align:center;white-space:pre;">Freeze</div>
<div style="position:absolute;left:560px;top:585px;width:7px;height:20px;background:#bccadb"></div>
<div style="position:absolute;left:566px;top:584px;width:51px;height:22px;box-sizing:border-box;border:1px solid #50627e;border-radius:2px;background:linear-gradient(#f7f9fd,#e3eaf4 50%,#c8d5e7);"></div>
<div style="position:absolute;left:291.5px;width:600px;top:589.37px;line-height:12.64px;font-size:11px;color:#111;text-align:center;white-space:pre;">Estimate</div>
<div style="position:absolute;left:616px;top:584px;width:51px;height:22px;box-sizing:border-box;border:1px solid #50627e;border-radius:2px;background:linear-gradient(#f7f9fd,#e3eaf4 50%,#c8d5e7);"></div>
<div style="position:absolute;left:341.5px;width:600px;top:589.37px;line-height:12.64px;font-size:11px;color:#111;text-align:center;white-space:pre;">Forecast</div>
<div style="position:absolute;left:666px;top:584px;width:33px;height:22px;box-sizing:border-box;border:1px solid #50627e;border-radius:2px;background:linear-gradient(#f7f9fd,#e3eaf4 50%,#c8d5e7);"></div>
<div style="position:absolute;left:382.5px;width:600px;top:589.37px;line-height:12.64px;font-size:11px;color:#111;text-align:center;white-space:pre;">Stats</div>
<div style="position:absolute;left:698px;top:584px;width:41px;height:22px;box-sizing:border-box;border:1px solid #50627e;border-radius:2px;background:linear-gradient(#f7f9fd,#e3eaf4 50%,#c8d5e7);"></div>
<div style="position:absolute;left:418.5px;width:600px;top:589.37px;line-height:12.64px;font-size:11px;color:#111;text-align:center;white-space:pre;">Resids</div>
<div style="position:absolute;left:343px;top:606px;width:451px;height:397px;background:linear-gradient(#f3f3f3,#e9e9e9 60%,#dedede)"></div>
<svg style="position:absolute;left:350px;top:630px" width="440" height="180" viewBox="350 630 440 180" font-family="Liberation Sans"><rect x="365.5" y="639.5" width="204" height="123" fill="#fff" stroke="#000" stroke-width="1"/><line x1="362" y1="640.6" x2="365" y2="640.6" stroke="#000" stroke-width="1"/><text x="360" y="643.1" font-size="7" text-anchor="end" fill="#000">8</text><line x1="362" y1="657.8" x2="365" y2="657.8" stroke="#000" stroke-width="1"/><text x="360" y="660.3" font-size="7" text-anchor="end" fill="#000">6</text><line x1="362" y1="674.9" x2="365" y2="674.9" stroke="#000" stroke-width="1"/><text x="360" y="677.4" font-size="7" text-anchor="end" fill="#000">4</text><line x1="362" y1="692.1" x2="365" y2="692.1" stroke="#000" stroke-width="1"/><text x="360" y="694.6" font-size="7" text-anchor="end" fill="#000">2</text><line x1="362" y1="709.3" x2="365" y2="709.3" stroke="#000" stroke-width="1"/><text x="360" y="711.8" font-size="7" text-anchor="end" fill="#000">0</text><line x1="362" y1="726.5" x2="365" y2="726.5" stroke="#000" stroke-width="1"/><text x="360" y="729.0" font-size="7" text-anchor="end" fill="#000">-2</text><line x1="362" y1="743.7" x2="365" y2="743.7" stroke="#000" stroke-width="1"/><text x="360" y="746.2" font-size="7" text-anchor="end" fill="#000">-4</text><line x1="362" y1="760.8" x2="365" y2="760.8" stroke="#000" stroke-width="1"/><text x="360" y="763.3" font-size="7" text-anchor="end" fill="#000">-6</text><polyline points="366.0,708.6 366.7,709.2 367.4,710.3 368.0,709.1 368.7,709.8 369.4,709.1 370.1,710.0 370.7,709.3 371.4,709.0 372.1,709.9 372.8,709.4 373.4,707.2 374.1,708.7 374.8,709.1 375.5,708.7 376.1,711.0 376.8,709.6 377.5,709.2 378.2,709.6 378.8,709.4 379.5,709.3 380.2,709.3 380.9,709.6 381.5,706.6 382.2,708.9 382.9,708.9 383.6,709.4 384.2,709.4 384.9,708.8 385.6,708.5 386.3,709.2 386.9,710.0 387.6,709.5 388.3,709.5 389.0,709.8 389.6,709.3 390.3,708.7 391.0,709.7 391.7,708.6 392.3,709.2 393.0,710.2 393.7,709.5 394.4,708.7 395.1,708.8 395.7,709.8 396.4,712.3 397.1,709.8 397.8,707.6 398.4,709.0 399.1,709.1 399.8,709.4 400.5,710.5 401.1,709.9 401.8,709.2 402.5,709.4 403.2,709.4 403.8,709.3 404.5,711.8 405.2,709.1 405.9,709.3 406.5,709.4 407.2,709.6 407.9,708.8 408.6,708.0 409.2,710.1 409.9,709.1 410.6,709.3 411.3,709.0 411.9,709.5 412.6,709.4 413.3,708.8 414.0,708.7 414.6,709.4 415.3,709.6 416.0,709.3 416.7,709.3 417.3,709.4 418.0,709.1 418.7,709.3 419.4,709.3 420.0,708.6 420.7,708.6 421.4,709.4 422.1,708.9 422.7,709.6 423.4,709.5 424.1,709.1 424.8,709.2 425.5,709.0 426.1,709.4 426.8,709.1 427.5,708.9 428.2,709.1 428.8,709.9 429.5,707.9 430.2,709.5 430.9,711.1 431.5,709.6 432.2,709.4 432.9,709.0 433.6,709.6 434.2,709.1 434.9,706.6 435.6,708.9 436.3,709.7 436.9,708.7 437.6,709.3 438.3,709.0 439.0,709.8 439.6,706.8 440.3,709.3 441.0,709.6 441.7,709.9 442.3,709.3 443.0,710.0 443.7,711.4 444.4,709.6 445.0,709.7 445.7,709.1 446.4,709.3 447.1,708.9 447.7,707.4 448.4,709.3 449.1,709.1 449.8,709.7 450.4,710.2 451.1,709.3 451.8,711.5 452.5,708.8 453.2,709.6 453.8,709.3 454.5,708.7 455.2,708.8 455.9,709.1 456.5,706.2 457.2,708.7 457.9,709.6 458.6,708.5 459.2,709.4 459.9,709.3 460.6,709.0 461.3,709.2 461.9,709.0 462.6,709.1 463.3,710.0 464.0,709.3 464.6,709.3 465.3,709.3 466.0,708.8 466.7,709.1 467.3,709.1 468.0,708.8 468.7,708.8 469.4,708.9 470.0,713.1 470.7,712.2 471.4,707.2 472.1,709.2 472.7,711.2 473.4,709.1 474.1,705.9 474.8,709.6 475.4,711.4 476.1,709.2 476.8,708.5 477.5,708.5 478.1,709.0 478.8,708.4 479.5,709.8 480.2,709.4 480.8,709.9 481.5,709.2 482.2,709.6 482.9,709.1 483.6,707.1 484.2,709.2 484.9,709.2 485.6,709.3 486.3,709.0 486.9,709.5 487.6,710.4 488.3,710.3 489.0,710.0 489.6,709.1 490.3,709.2 491.0,706.8 491.7,709.2 492.3,709.9 493.0,711.7 493.7,708.7 494.4,709.8 495.0,709.0 495.7,709.1 496.4,710.6 497.1,710.4 497.7,708.7 498.4,709.0 499.1,708.9 499.8,710.0 500.4,709.5 501.1,709.4 501.8,709.0 502.5,709.3 503.1,708.8 503.8,709.5 504.5,705.4 505.2,709.6 505.8,709.3 506.5,709.1 507.2,709.3 507.9,707.1 508.5,713.0 509.2,709.9 509.9,708.7 510.6,709.1 511.3,710.3 511.9,709.5 512.6,709.5 513.3,709.2 514.0,709.0 514.6,709.3 515.3,709.2 516.0,709.2 516.7,709.0 517.3,709.4 518.0,709.3 518.7,711.9 519.4,709.5 520.0,708.7 520.7,707.3 521.4,708.6 522.1,709.2 522.7,709.6 523.4,709.0 524.1,707.1 524.8,709.1 525.4,708.8 526.1,709.2 526.8,708.8 527.5,709.0 528.1,709.1 528.8,709.0 529.5,708.9 530.2,709.0 530.8,709.2 531.5,709.1 532.2,709.4 532.9,709.3 533.5,708.8 534.2,709.6 534.9,709.2 535.6,709.6 536.2,709.2 536.9,709.5 537.6,709.7 538.3,709.3 538.9,711.9 539.6,710.2 540.3,709.7 541.0,709.0 541.7,709.5 542.3,709.6 543.0,709.6 543.7,706.8 544.4,709.9 545.0,709.1 545.7,707.1 546.4,707.5 547.1,709.4 547.7,709.4 548.4,707.2 549.1,708.7 549.8,709.1 550.4,709.3 551.1,709.1 551.8,709.2 552.5,709.0 553.1,710.0 553.8,709.2 554.5,708.5 555.2,709.6 555.8,708.8 556.5,709.3 557.2,708.2 557.9,709.5 558.5,709.5 559.2,709.8 559.9,709.0 560.6,709.8 561.2,708.8 561.9,708.5 562.6,709.0 563.3,710.0 563.9,709.4 564.6,710.1 565.3,709.5 566.0,709.6 566.6,709.0 567.3,709.0 568.0,709.1" fill="none" stroke="#0000ff" stroke-width="1.3"/><polyline points="366.4,678.5 367.5,678.6 368.6,680.5 369.7,679.5 371.3,668.7 372.9,672.1 374.0,672.7 375.1,675.4 376.2,675.6 377.3,677.7 378.2,678.2 379.1,679.7 380.0,682.1 381.1,683.4 382.2,681.8 382.8,671.7 383.7,671.5 384.7,671.1 385.7,668.9 386.6,667.2 388.2,674.2 389.3,672.6 390.4,675.5 391.5,675.2 392.6,675.9 393.7,676.9 395.4,674.7 396.3,676.9 397.2,676.1 398.1,678.1 399.0,680.1 399.9,681.2 400.8,683.5 401.7,679.7 402.7,677.1 403.6,674.9 404.7,678.9 405.7,681.0 406.8,679.6 407.9,679.2 409.0,677.8 409.9,679.6 410.9,683.0 411.8,685.0 412.7,683.2 413.7,683.6 414.6,682.9 415.6,683.2 416.5,682.7 417.4,681.3 418.3,683.0 419.4,677.8 420.5,675.7 421.6,673.6 423.2,675.9 424.2,677.5 425.1,677.1 426.0,679.4 427.4,682.4 427.6,662.2 428.7,659.7 429.8,663.7 430.7,668.6 431.6,672.1 432.5,675.9 433.6,665.7 434.6,668.2 435.5,669.9 436.4,670.2 438.0,680.5 439.7,665.8 440.7,669.9 441.8,672.3 443.5,677.5 445.1,671.1 446.2,669.1 447.3,668.8 448.4,669.0 449.5,671.7 450.6,673.8 451.7,673.9 452.8,674.7 453.9,676.5 455.0,680.2 456.1,675.3 457.2,677.0 458.2,678.7 459.3,681.6 460.4,681.2 461.5,683.8 462.6,684.6 463.7,686.0 465.4,682.5 466.3,683.4 467.2,682.6 468.1,683.7 469.2,682.7 470.3,683.3 471.4,684.8 472.5,684.1 473.6,681.4 474.7,678.8 475.7,677.9 476.8,677.7 477.9,677.0 479.0,671.8 480.1,666.8 481.2,669.5 482.3,671.0 483.4,673.7 484.5,676.9 485.6,678.4 486.7,679.2 487.8,680.7 488.9,682.2 490.0,679.5 491.1,680.6 492.2,679.2 493.1,680.5 494.0,681.4 494.9,681.4 496.0,675.4 496.9,675.9 497.8,678.6 498.7,678.4 499.8,679.9 500.9,681.7 502.0,683.0 503.1,684.8 504.2,685.3 505.3,686.4 506.4,686.8 507.5,686.7 508.6,687.4 509.7,686.1 510.7,687.9 511.8,686.8 512.9,685.2 514.0,683.3 515.1,681.3 516.2,681.1 517.3,680.2 518.4,683.0 519.5,684.3 520.6,683.8 521.7,683.7 522.8,682.5 523.9,682.3 524.9,683.7 525.8,684.3 526.8,686.5 527.8,685.5 528.8,685.9 529.7,688.5 530.6,687.6 531.5,686.8 532.6,684.0 533.7,681.6 534.8,681.8 535.9,681.9 537.0,683.8 538.1,685.5 539.2,683.5 540.3,682.8 541.4,681.4 542.5,683.7 543.6,683.7 544.7,685.0 545.7,684.6 546.8,684.0 547.9,685.3 549.0,686.6 550.1,687.2 551.2,688.0 552.3,688.2 553.4,688.2 554.5,687.0 555.4,686.9 556.3,685.5 557.2,683.8 558.9,685.4 560.0,686.1 561.1,686.0 562.2,687.1 563.1,688.2 564.0,687.2 564.9,688.9 565.8,689.4 566.7,689.6 567.6,688.8" fill="none" stroke="#ff0000" stroke-width="1.5" stroke-dasharray="2.5,1"/><polyline points="366.4,738.2 367.3,737.1 368.2,736.3 369.1,735.5 370.7,740.5 372.4,747.0 373.5,745.3 374.6,742.7 376.2,739.0 377.3,738.9 378.4,738.7 379.3,735.8 380.2,736.2 381.1,735.8 382.8,743.1 383.7,744.8 384.6,745.9 385.5,747.0 386.6,747.5 387.7,745.2 389.3,743.7 390.4,743.8 391.5,742.1 392.6,741.0 393.7,741.3 394.8,741.1 395.9,740.0 397.0,740.3 398.1,738.2 399.2,737.9 400.3,736.6 401.4,733.8 402.5,737.2 403.6,739.2 404.5,737.6 405.4,736.1 406.3,735.9 407.4,736.7 408.5,738.3 409.6,738.5 410.7,735.3 411.8,732.6 412.7,734.5 413.6,734.2 414.5,736.2 415.6,735.9 416.7,734.1 417.8,734.0 418.9,740.7 419.8,740.4 420.7,741.1 421.6,740.1 421.9,745.4 422.9,742.7 423.9,742.7 424.9,739.2 426.0,737.9 427.1,736.5 427.4,748.9 428.2,757.4 429.3,754.9 430.4,750.0 431.5,746.3 432.5,742.4 434.2,747.1 435.1,745.6 436.1,742.3 437.1,739.3 438.0,738.7 439.7,749.1 440.7,747.0 441.8,744.8 442.9,741.4 444.0,741.9 445.1,743.5 446.2,744.7 447.3,746.4 448.4,743.2 449.5,743.0 450.6,740.9 451.7,739.6 452.8,739.8 453.9,738.0 455.0,737.0 456.1,738.4 457.2,739.6 458.2,737.1 459.3,736.3 460.4,734.7 461.5,733.8 462.6,733.4 463.7,731.8 464.8,733.4 465.9,734.6 466.8,735.3 467.7,734.1 468.6,734.0 469.6,733.9 470.6,731.9 471.5,732.4 472.5,733.1 473.6,734.1 474.7,733.6 475.7,734.8 476.8,737.3 477.9,738.0 479.6,750.4 480.5,747.1 481.4,745.7 482.3,743.1 483.4,741.6 484.5,737.8 485.6,737.4 486.7,736.4 487.8,734.1 488.9,735.1 490.0,737.2 491.1,737.1 492.2,740.8 493.1,737.9 494.0,736.7 494.9,736.5 496.5,740.5 497.6,737.1 498.7,736.1 499.8,734.7 500.9,733.2 502.0,731.7 503.1,730.9 504.2,730.9 505.3,728.7 506.4,729.7 507.5,729.1 508.6,728.1 509.7,729.1 510.7,730.0 511.8,729.8 513.5,730.3 514.4,734.0 515.4,734.9 516.4,736.7 517.3,735.8 518.4,734.4 519.5,731.8 520.6,734.2 521.7,733.3 522.8,733.3 523.9,734.5 525.0,734.5 526.1,733.1 527.2,730.4 528.2,728.9 529.2,730.9 530.1,729.9 531.0,730.3 531.9,730.2 532.9,731.6 533.9,734.8 534.8,735.6 535.9,733.0 537.0,733.6 538.1,733.4 539.2,734.4 540.3,733.1 541.4,735.6 542.5,733.0 543.6,734.5 544.7,732.9 545.7,732.1 546.8,732.1 547.9,732.5 549.0,730.3 550.1,729.3 551.2,730.1 552.3,729.1 553.4,728.5 554.5,728.3 555.6,728.6 556.7,729.5 557.8,730.4 558.9,730.1 560.0,731.0 561.1,729.5 562.2,729.8 563.1,728.5 564.1,728.5 565.1,727.2 566.1,727.4 567.1,727.6" fill="none" stroke="#ff0000" stroke-width="1.5" stroke-dasharray="2.5,1"/><line x1="367.5" y1="762" x2="367.5" y2="767" stroke="#000" stroke-width="0.9"/><line x1="371.3" y1="762" x2="371.3" y2="765.5" stroke="#000" stroke-width="0.9"/><line x1="375.1" y1="762" x2="375.1" y2="765.5" stroke="#000" stroke-width="0.9"/><line x1="378.9" y1="762" x2="378.9" y2="767" stroke="#000" stroke-width="0.9"/><line x1="382.7" y1="762" x2="382.7" y2="765.5" stroke="#000" stroke-width="0.9"/><line x1="386.4" y1="762" x2="386.4" y2="765.5" stroke="#000" stroke-width="0.9"/><line x1="390.2" y1="762" x2="390.2" y2="767" stroke="#000" stroke-width="0.9"/><line x1="394.0" y1="762" x2="394.0" y2="765.5" stroke="#000" stroke-width="0.9"/><line x1="397.8" y1="762" x2="397.8" y2="765.5" stroke="#000" stroke-width="0.9"/><line x1="401.6" y1="762" x2="401.6" y2="767" stroke="#000" stroke-width="0.9"/><line x1="405.4" y1="762" x2="405.4" y2="765.5" stroke="#000" stroke-width="0.9"/><line x1="409.2" y1="762" x2="409.2" y2="765.5" stroke="#000" stroke-width="0.9"/><line x1="413.0" y1="762" x2="413.0" y2="767" stroke="#000" stroke-width="0.9"/><line x1="416.8" y1="762" x2="416.8" y2="765.5" stroke="#000" stroke-width="0.9"/><line x1="420.6" y1="762" x2="420.6" y2="765.5" stroke="#000" stroke-width="0.9"/><line x1="424.4" y1="762" x2="424.4" y2="767" stroke="#000" stroke-width="0.9"/><line x1="428.1" y1="762" x2="428.1" y2="765.5" stroke="#000" stroke-width="0.9"/><line x1="431.9" y1="762" x2="431.9" y2="765.5" stroke="#000" stroke-width="0.9"/><line x1="435.7" y1="762" x2="435.7" y2="767" stroke="#000" stroke-width="0.9"/><line x1="439.5" y1="762" x2="439.5" y2="765.5" stroke="#000" stroke-width="0.9"/><line x1="443.3" y1="762" x2="443.3" y2="765.5" stroke="#000" stroke-width="0.9"/><line x1="447.1" y1="762" x2="447.1" y2="767" stroke="#000" stroke-width="0.9"/><line x1="450.9" y1="762" x2="450.9" y2="765.5" stroke="#000" stroke-width="0.9"/><line x1="454.7" y1="762" x2="454.7" y2="765.5" stroke="#000" stroke-width="0.9"/><line x1="458.5" y1="762" x2="458.5" y2="767" stroke="#000" stroke-width="0.9"/><line x1="462.2" y1="762" x2="462.2" y2="765.5" stroke="#000" stroke-width="0.9"/><line x1="466.0" y1="762" x2="466.0" y2="765.5" stroke="#000" stroke-width="0.9"/><line x1="469.8" y1="762" x2="469.8" y2="767" stroke="#000" stroke-width="0.9"/><line x1="473.6" y1="762" x2="473.6" y2="765.5" stroke="#000" stroke-width="0.9"/><line x1="477.4" y1="762" x2="477.4" y2="765.5" stroke="#000" stroke-width="0.9"/><line x1="481.2" y1="762" x2="481.2" y2="767" stroke="#000" stroke-width="0.9"/><line x1="485.0" y1="762" x2="485.0" y2="765.5" stroke="#000" stroke-width="0.9"/><line x1="488.8" y1="762" x2="488.8" y2="765.5" stroke="#000" stroke-width="0.9"/><line x1="492.6" y1="762" x2="492.6" y2="767" stroke="#000" stroke-width="0.9"/><line x1="496.4" y1="762" x2="496.4" y2="765.5" stroke="#000" stroke-width="0.9"/><line x1="500.1" y1="762" x2="500.1" y2="765.5" stroke="#000" stroke-width="0.9"/><line x1="503.9" y1="762" x2="503.9" y2="767" stroke="#000" stroke-width="0.9"/><line x1="507.7" y1="762" x2="507.7" y2="765.5" stroke="#000" stroke-width="0.9"/><line x1="511.5" y1="762" x2="511.5" y2="765.5" stroke="#000" stroke-width="0.9"/><line x1="515.3" y1="762" x2="515.3" y2="767" stroke="#000" stroke-width="0.9"/><line x1="519.1" y1="762" x2="519.1" y2="765.5" stroke="#000" stroke-width="0.9"/><line x1="522.9" y1="762" x2="522.9" y2="765.5" stroke="#000" stroke-width="0.9"/><line x1="526.7" y1="762" x2="526.7" y2="767" stroke="#000" stroke-width="0.9"/><line x1="530.5" y1="762" x2="530.5" y2="765.5" stroke="#000" stroke-width="0.9"/><line x1="534.3" y1="762" x2="534.3" y2="765.5" stroke="#000" stroke-width="0.9"/><line x1="538.0" y1="762" x2="538.0" y2="767" stroke="#000" stroke-width="0.9"/><line x1="541.8" y1="762" x2="541.8" y2="765.5" stroke="#000" stroke-width="0.9"/><line x1="545.6" y1="762" x2="545.6" y2="765.5" stroke="#000" stroke-width="0.9"/><line x1="549.4" y1="762" x2="549.4" y2="767" stroke="#000" stroke-width="0.9"/><line x1="553.2" y1="762" x2="553.2" y2="765.5" stroke="#000" stroke-width="0.9"/><line x1="557.0" y1="762" x2="557.0" y2="765.5" stroke="#000" stroke-width="0.9"/><line x1="560.8" y1="762" x2="560.8" y2="767" stroke="#000" stroke-width="0.9"/><line x1="564.6" y1="762" x2="564.6" y2="765.5" stroke="#000" stroke-width="0.9"/><line x1="568.4" y1="762" x2="568.4" y2="765.5" stroke="#000" stroke-width="0.9"/><text x="373.2" y="775" font-size="6.5" text-anchor="middle" fill="#000">I</text><text x="384" y="775" font-size="6.5" text-anchor="middle" fill="#000">II</text><text x="394.8" y="775" font-size="6.5" text-anchor="middle" fill="#000">III</text><text x="406" y="775" font-size="6.5" text-anchor="middle" fill="#000">IV</text><text x="418" y="775" font-size="6.5" text-anchor="middle" fill="#000">I</text><text x="429" y="775" font-size="6.5" text-anchor="middle" fill="#000">II</text><text x="440" y="775" font-size="6.5" text-anchor="middle" fill="#000">III</text><text x="452" y="775" font-size="6.5" text-anchor="middle" fill="#000">IV</text><text x="463" y="775" font-size="6.5" text-anchor="middle" fill="#000">I</text><text x="474" y="775" font-size="6.5" text-anchor="middle" fill="#000">II</text><text x="485.5" y="775" font-size="6.5" text-anchor="middle" fill="#000">III</text><text x="496.5" y="775" font-size="6.5" text-anchor="middle" fill="#000">IV</text><text x="508" y="775" font-size="6.5" text-anchor="middle" fill="#000">I</text><text x="519" y="775" font-size="6.5" text-anchor="middle" fill="#000">II</text><text x="530" y="775" font-size="6.5" text-anchor="middle" fill="#000">III</text><text x="542" y="775" font-size="6.5" text-anchor="middle" fill="#000">IV</text><text x="553" y="775" font-size="6.5" text-anchor="middle" fill="#000">I</text><text x="563.5" y="775" font-size="6.5" text-anchor="middle" fill="#000">II</text><text x="389.8" y="786" font-size="7" text-anchor="middle" fill="#000">2010</text><text x="434.4" y="786" font-size="7" text-anchor="middle" fill="#000">2011</text><text x="480" y="786" font-size="7" text-anchor="middle" fill="#000">2012</text><text x="525" y="786" font-size="7" text-anchor="middle" fill="#000">2013</text><text x="559.6" y="786" font-size="7" text-anchor="middle" fill="#000">2014</text><rect x="415.5" y="793.5" width="101" height="12" fill="#fff" stroke="#000" stroke-width="1"/><line x1="418" y1="799.5" x2="433" y2="799.5" stroke="#0000ff" stroke-width="1"/><text x="434" y="802" font-size="6.5" fill="#000">RETURNSF</text><line x1="472" y1="799.5" x2="490" y2="799.5" stroke="#ff0000" stroke-width="1" stroke-dasharray="2,1"/><text x="491" y="802" font-size="6.5" fill="#000">&#177; 2 S.E.</text></svg>
<div style="position:absolute;left:631px;top:640px;width:151px;height:115px;box-sizing:border-box;border:1px solid #000;background:#fff"></div>
<div style="position:absolute;left:635px;top:642.63px;line-height:9.19px;font-size:8px;color:#000;white-space:pre;letter-spacing:0.4px">Forecast: RETURNSF</div>
<div style="position:absolute;left:635px;top:652.63px;line-height:9.19px;font-size:8px;color:#000;white-space:pre;letter-spacing:0.33px">Actual: RETURNS</div>
<div style="position:absolute;left:635px;top:662.63px;line-height:9.19px;font-size:8px;color:#000;white-space:pre;letter-spacing:0.05px">Forecast sample: 12/31/2009 6/13/2014</div>
<div style="position:absolute;left:635px;top:672.63px;line-height:9.19px;font-size:8px;color:#000;white-space:pre;letter-spacing:0.07px">Included observations: 1156</div>
<div style="position:absolute;left:635px;top:682.63px;line-height:9.19px;font-size:8px;color:#000;white-space:pre;letter-spacing:-0.16px">Root Mean Squared Error</div>
<div style="position:absolute;left:743.5px;top:682.63px;line-height:9.19px;font-size:8px;color:#000;white-space:pre;letter-spacing:-0.44px">1.473420</div>
<div style="position:absolute;left:635px;top:692.63px;line-height:9.19px;font-size:8px;color:#000;white-space:pre;letter-spacing:-0.16px">Mean Absolute Error</div>
<div style="position:absolute;left:743.5px;top:692.63px;line-height:9.19px;font-size:8px;color:#000;white-space:pre;letter-spacing:-0.44px">1.078335</div>
<div style="position:absolute;left:635px;top:702.63px;line-height:9.19px;font-size:8px;color:#000;white-space:pre;letter-spacing:-0.16px">Mean Abs. Percent Error</div>
<div style="position:absolute;left:743.5px;top:702.63px;line-height:9.19px;font-size:8px;color:#000;white-space:pre;letter-spacing:-0.44px">112.2329</div>
<div style="position:absolute;left:635px;top:712.63px;line-height:9.19px;font-size:8px;color:#000;white-space:pre;letter-spacing:-0.16px">Theil Inequality Coefficient</div>
<div style="position:absolute;left:743.5px;top:712.63px;line-height:9.19px;font-size:8px;color:#000;white-space:pre;letter-spacing:-0.44px">0.945092</div>
<div style="position:absolute;left:645px;top:722.63px;line-height:9.19px;font-size:8px;color:#000;white-space:pre;letter-spacing:-0.16px">Bias Proportion</div>
<div style="position:absolute;left:743.5px;top:722.63px;line-height:9.19px;font-size:8px;color:#000;white-space:pre;letter-spacing:-0.44px">0.000370</div>
<div style="position:absolute;left:645px;top:732.63px;line-height:9.19px;font-size:8px;color:#000;white-space:pre;letter-spacing:-0.16px">Variance Proportion</div>
<div style="position:absolute;left:743.5px;top:732.63px;line-height:9.19px;font-size:8px;color:#000;white-space:pre;letter-spacing:-0.44px">0.917358</div>
<div style="position:absolute;left:645px;top:742.63px;line-height:9.19px;font-size:8px;color:#000;white-space:pre;letter-spacing:-0.16px">Covariance Proportion</div>
<div style="position:absolute;left:743.5px;top:742.63px;line-height:9.19px;font-size:8px;color:#000;white-space:pre;letter-spacing:-0.44px">0.082272</div>
<svg style="position:absolute;left:350px;top:812px" width="440" height="180" viewBox="350 812 440 180" font-family="Liberation Sans"><rect x="365.5" y="821.5" width="204" height="122" fill="#fff" stroke="#000" stroke-width="1"/><line x1="362" y1="822.6" x2="365" y2="822.6" stroke="#000" stroke-width="1"/><text x="360" y="825.1" font-size="7" text-anchor="end" fill="#000">10</text><line x1="362" y1="846.6" x2="365" y2="846.6" stroke="#000" stroke-width="1"/><text x="360" y="849.1" font-size="7" text-anchor="end" fill="#000">8</text><line x1="362" y1="870.5" x2="365" y2="870.5" stroke="#000" stroke-width="1"/><text x="360" y="873.0" font-size="7" text-anchor="end" fill="#000">6</text><line x1="362" y1="894.5" x2="365" y2="894.5" stroke="#000" stroke-width="1"/><text x="360" y="897.0" font-size="7" text-anchor="end" fill="#000">4</text><line x1="362" y1="918.4" x2="365" y2="918.4" stroke="#000" stroke-width="1"/><text x="360" y="920.9" font-size="7" text-anchor="end" fill="#000">2</text><line x1="362" y1="942.4" x2="365" y2="942.4" stroke="#000" stroke-width="1"/><text x="360" y="944.9" font-size="7" text-anchor="end" fill="#000">0</text><polyline points="366.2,904.9 367.3,908.0 368.4,909.2 369.4,914.3 371.1,883.9 372.3,887.8 373.5,891.3 374.7,898.3 375.9,906.0 377.1,903.7 378.4,904.0 379.4,908.7 380.5,911.1 381.6,914.1 382.4,913.5 383.2,892.7 384.3,888.4 385.4,881.1 386.5,876.2 388.1,888.2 389.3,891.9 390.5,897.8 391.7,900.2 392.9,902.1 394.6,895.2 395.8,897.7 397.0,901.9 398.1,908.8 399.2,910.7 400.2,915.0 401.3,912.5 402.4,906.1 403.5,899.1 404.7,903.8 405.9,910.7 407.1,907.3 408.3,899.9 409.4,908.2 410.5,914.8 411.6,916.8 412.7,918.0 413.7,916.1 414.8,912.7 416.0,915.0 417.3,917.6 418.9,897.7 420.1,892.4 421.3,885.6 422.5,895.1 423.7,905.5 425.0,907.7 426.2,910.9 427.5,855.6 428.4,846.8 429.7,864.7 431.0,888.4 432.7,898.3 434.3,872.8 435.4,885.9 436.4,898.5 437.5,911.3 439.1,874.0 440.4,885.1 441.6,898.2 442.8,900.1 444.0,900.6 445.6,885.2 446.8,885.7 448.1,883.2 449.3,890.7 450.5,899.4 451.6,902.0 452.6,905.5 453.7,910.8 454.9,901.9 456.2,899.2 457.4,903.9 458.6,914.4 460.2,914.4 461.3,918.0 462.4,917.6 463.5,922.9 465.1,914.1 466.0,914.8 467.0,912.5 468.0,912.2 469.0,915.4 469.9,916.3 471.0,918.2 472.1,921.1 473.2,923.2 474.3,914.0 475.3,910.6 476.4,904.3 477.5,891.8 478.6,884.7 479.7,874.3 480.7,883.2 481.8,888.6 482.9,891.5 484.0,897.2 485.1,906.5 486.1,909.3 487.2,912.8 488.3,916.5 489.4,918.2 490.6,911.4 491.8,902.8 493.0,909.5 494.2,915.4 495.9,900.2 496.9,904.6 498.0,909.4 499.1,911.7 500.1,913.4 501.1,919.1 502.1,917.6 503.2,922.0 504.1,922.9 505.1,922.5 506.1,924.6 507.1,925.8 508.0,925.4 509.2,922.3 510.5,920.3 511.5,923.0 512.6,921.6 513.7,925.7 514.8,919.6 515.9,911.8 516.9,907.4 518.6,917.7 519.6,916.2 520.7,917.4 521.8,918.4 523.0,917.9 524.2,913.4 525.2,913.4 526.3,919.1 527.3,919.7 528.3,922.7 529.4,924.7 530.4,925.3 531.5,926.1 532.6,920.4 533.7,915.5 534.8,910.9 535.8,912.9 536.9,919.6 538.0,922.2 539.1,919.3 540.2,914.2 541.2,915.0 542.3,916.1 543.4,917.0 544.5,917.1 545.5,920.0 546.5,919.4 547.5,917.8 548.5,918.0 549.8,919.7 551.0,922.1 552.0,925.3 553.0,922.0 554.0,925.7 555.0,927.0 556.2,924.4 557.5,921.6 558.5,921.3 559.6,920.8 560.7,923.1 561.8,924.1 562.9,921.5 563.9,924.5 565.0,923.4 566.1,925.9 567.2,924.8 568.0,923.6" fill="none" stroke="#0000ff" stroke-width="1.3"/><line x1="367.5" y1="943" x2="367.5" y2="948" stroke="#000" stroke-width="0.9"/><line x1="371.3" y1="943" x2="371.3" y2="946.5" stroke="#000" stroke-width="0.9"/><line x1="375.1" y1="943" x2="375.1" y2="946.5" stroke="#000" stroke-width="0.9"/><line x1="378.9" y1="943" x2="378.9" y2="948" stroke="#000" stroke-width="0.9"/><line x1="382.7" y1="943" x2="382.7" y2="946.5" stroke="#000" stroke-width="0.9"/><line x1="386.4" y1="943" x2="386.4" y2="946.5" stroke="#000" stroke-width="0.9"/><line x1="390.2" y1="943" x2="390.2" y2="948" stroke="#000" stroke-width="0.9"/><line x1="394.0" y1="943" x2="394.0" y2="946.5" stroke="#000" stroke-width="0.9"/><line x1="397.8" y1="943" x2="397.8" y2="946.5" stroke="#000" stroke-width="0.9"/><line x1="401.6" y1="943" x2="401.6" y2="948" stroke="#000" stroke-width="0.9"/><line x1="405.4" y1="943" x2="405.4" y2="946.5" stroke="#000" stroke-width="0.9"/><line x1="409.2" y1="943" x2="409.2" y2="946.5" stroke="#000" stroke-width="0.9"/><line x1="413.0" y1="943" x2="413.0" y2="948" stroke="#000" stroke-width="0.9"/><line x1="416.8" y1="943" x2="416.8" y2="946.5" stroke="#000" stroke-width="0.9"/><line x1="420.6" y1="943" x2="420.6" y2="946.5" stroke="#000" stroke-width="0.9"/><line x1="424.4" y1="943" x2="424.4" y2="948" stroke="#000" stroke-width="0.9"/><line x1="428.1" y1="943" x2="428.1" y2="946.5" stroke="#000" stroke-width="0.9"/><line x1="431.9" y1="943" x2="431.9" y2="946.5" stroke="#000" stroke-width="0.9"/><line x1="435.7" y1="943" x2="435.7" y2="948" stroke="#000" stroke-width="0.9"/><line x1="439.5" y1="943" x2="439.5" y2="946.5" stroke="#000" stroke-width="0.9"/><line x1="443.3" y1="943" x2="443.3" y2="946.5" stroke="#000" stroke-width="0.9"/><line x1="447.1" y1="943" x2="447.1" y2="948" stroke="#000" stroke-width="0.9"/><line x1="450.9" y1="943" x2="450.9" y2="946.5" stroke="#000" stroke-width="0.9"/><line x1="454.7" y1="943" x2="454.7" y2="946.5" stroke="#000" stroke-width="0.9"/><line x1="458.5" y1="943" x2="458.5" y2="948" stroke="#000" stroke-width="0.9"/><line x1="462.2" y1="943" x2="462.2" y2="946.5" stroke="#000" stroke-width="0.9"/><line x1="466.0" y1="943" x2="466.0" y2="946.5" stroke="#000" stroke-width="0.9"/><line x1="469.8" y1="943" x2="469.8" y2="948" stroke="#000" stroke-width="0.9"/><line x1="473.6" y1="943" x2="473.6" y2="946.5" stroke="#000" stroke-width="0.9"/><line x1="477.4" y1="943" x2="477.4" y2="946.5" stroke="#000" stroke-width="0.9"/><line x1="481.2" y1="943" x2="481.2" y2="948" stroke="#000" stroke-width="0.9"/><line x1="485.0" y1="943" x2="485.0" y2="946.5" stroke="#000" stroke-width="0.9"/><line x1="488.8" y1="943" x2="488.8" y2="946.5" stroke="#000" stroke-width="0.9"/><line x1="492.6" y1="943" x2="492.6" y2="948" stroke="#000" stroke-width="0.9"/><line x1="496.4" y1="943" x2="496.4" y2="946.5" stroke="#000" stroke-width="0.9"/><line x1="500.1" y1="943" x2="500.1" y2="946.5" stroke="#000" stroke-width="0.9"/><line x1="503.9" y1="943" x2="503.9" y2="948" stroke="#000" stroke-width="0.9"/><line x1="507.7" y1="943" x2="507.7" y2="946.5" stroke="#000" stroke-width="0.9"/><line x1="511.5" y1="943" x2="511.5" y2="946.5" stroke="#000" stroke-width="0.9"/><line x1="515.3" y1="943" x2="515.3" y2="948" stroke="#000" stroke-width="0.9"/><line x1="519.1" y1="943" x2="519.1" y2="946.5" stroke="#000" stroke-width="0.9"/><line x1="522.9" y1="943" x2="522.9" y2="946.5" stroke="#000" stroke-width="0.9"/><line x1="526.7" y1="943" x2="526.7" y2="948" stroke="#000" stroke-width="0.9"/><line x1="530.5" y1="943" x2="530.5" y2="946.5" stroke="#000" stroke-width="0.9"/><line x1="534.3" y1="943" x2="534.3" y2="946.5" stroke="#000" stroke-width="0.9"/><line x1="538.0" y1="943" x2="538.0" y2="948" stroke="#000" stroke-width="0.9"/><line x1="541.8" y1="943" x2="541.8" y2="946.5" stroke="#000" stroke-width="0.9"/><line x1="545.6" y1="943" x2="545.6" y2="946.5" stroke="#000" stroke-width="0.9"/><line x1="549.4" y1="943" x2="549.4" y2="948" stroke="#000" stroke-width="0.9"/><line x1="553.2" y1="943" x2="553.2" y2="946.5" stroke="#000" stroke-width="0.9"/><line x1="557.0" y1="943" x2="557.0" y2="946.5" stroke="#000" stroke-width="0.9"/><line x1="560.8" y1="943" x2="560.8" y2="948" stroke="#000" stroke-width="0.9"/><line x1="564.6" y1="943" x2="564.6" y2="946.5" stroke="#000" stroke-width="0.9"/><line x1="568.4" y1="943" x2="568.4" y2="946.5" stroke="#000" stroke-width="0.9"/><text x="373.2" y="956" font-size="6.5" text-anchor="middle" fill="#000">I</text><text x="384" y="956" font-size="6.5" text-anchor="middle" fill="#000">II</text><text x="394.8" y="956" font-size="6.5" text-anchor="middle" fill="#000">III</text><text x="406" y="956" font-size="6.5" text-anchor="middle" fill="#000">IV</text><text x="418" y="956" font-size="6.5" text-anchor="middle" fill="#000">I</text><text x="429" y="956" font-size="6.5" text-anchor="middle" fill="#000">II</text><text x="440" y="956" font-size="6.5" text-anchor="middle" fill="#000">III</text><text x="452" y="956" font-size="6.5" text-anchor="middle" fill="#000">IV</text><text x="463" y="956" font-size="6.5" text-anchor="middle" fill="#000">I</text><text x="474" y="956" font-size="6.5" text-anchor="middle" fill="#000">II</text><text x="485.5" y="956" font-size="6.5" text-anchor="middle" fill="#000">III</text><text x="496.5" y="956" font-size="6.5" text-anchor="middle" fill="#000">IV</text><text x="508" y="956" font-size="6.5" text-anchor="middle" fill="#000">I</text><text x="519" y="956" font-size="6.5" text-anchor="middle" fill="#000">II</text><text x="530" y="956" font-size="6.5" text-anchor="middle" fill="#000">III</text><text x="542" y="956" font-size="6.5" text-anchor="middle" fill="#000">IV</text><text x="553" y="956" font-size="6.5" text-anchor="middle" fill="#000">I</text><text x="563.5" y="956" font-size="6.5" text-anchor="middle" fill="#000">II</text><text x="389.8" y="967" font-size="7" text-anchor="middle" fill="#000">2010</text><text x="434.4" y="967" font-size="7" text-anchor="middle" fill="#000">2011</text><text x="480" y="967" font-size="7" text-anchor="middle" fill="#000">2012</text><text x="525" y="967" font-size="7" text-anchor="middle" fill="#000">2013</text><text x="559.6" y="967" font-size="7" text-anchor="middle" fill="#000">2014</text><rect x="421.5" y="974.5" width="88" height="12" fill="#fff" stroke="#000" stroke-width="1"/><line x1="424" y1="980.5" x2="439" y2="980.5" stroke="#0000ff" stroke-width="1"/><text x="440" y="983" font-size="6.5" fill="#000">Forecast of Variance</text></svg>
<div style="position:absolute;left:12px;top:132px;width:1906px;height:871px;overflow:hidden;">
<div style="position:absolute;left:789px;top:414px;width:477px;height:480px;box-sizing:border-box;border:1px solid #000;border-radius:6px 6px 0 0;background:linear-gradient(#c0cee2 0px,#d4dfee 18px,#e2eaf5 30px,#e3ebf6 100%)"></div>
</div>
<svg style="position:absolute;left:811px;top:553px" width="18" height="16" viewBox="0 0 18 16"><rect x="0.5" y="0.5" width="17" height="15" fill="#fdf8e8" stroke="#333"/><rect x="1" y="1" width="16" height="2" fill="#2a5ad0"/><path d="M3 5.5H8M10 5.5H15M3 7.5H7M9 7.5H12M3 9.5H6M3 11.5H8M10 11.5H14M3 13.5H6M8 13.5H11" stroke="#555" stroke-width="1"/></svg>
<div style="position:absolute;left:833px;top:555.11px;line-height:16.09px;font-size:14px;color:#1a2230;white-space:pre;">Program: UNTITLED</div>
<div style="position:absolute;left:1215.5px;top:562.8px;width:7.5px;height:2.2px;background:#3d5577"></div>
<div style="position:absolute;left:1235px;top:557px;width:9px;height:8px;box-sizing:border-box;border:1.3px solid #3d5577;border-top-width:2.6px"></div>
<svg style="position:absolute;left:1254px;top:557px" width="10" height="9" viewBox="0 0 10 9"><path d="M1 0.5L9 8.5M9 0.5L1 8.5" stroke="#3d5577" stroke-width="2.2"/></svg>
<div style="position:absolute;left:808px;top:577px;width:462px;height:22px;overflow:hidden;">
<div style="position:absolute;left:0px;top:0px;width:462px;height:22px;background:#bfcbdc;border-top:1px solid #50627e;border-bottom:1px solid #50627e;box-sizing:border-box"></div><div style="position:absolute;left:0px;top:0px;width:29px;height:22px;box-sizing:border-box;border:1px solid #50627e;border-radius:2px;background:linear-gradient(#f7f9fd,#e3eaf4 50%,#c8d5e7);"></div><div style="position:absolute;left:-285.5px;width:600px;top:5.37px;line-height:12.64px;font-size:11px;color:#111;text-align:center;white-space:pre;">Run</div><div style="position:absolute;left:29px;top:1px;width:7px;height:20px;background:#bccadb"></div><div style="position:absolute;left:35px;top:0px;width:32px;height:22px;box-sizing:border-box;border:1px solid #50627e;border-radius:2px;background:linear-gradient(#f7f9fd,#e3eaf4 50%,#c8d5e7);"></div><div style="position:absolute;left:-249.0px;width:600px;top:5.37px;line-height:12.64px;font-size:11px;color:#111;text-align:center;white-space:pre;">Print</div><div style="position:absolute;left:66px;top:0px;width:31px;height:22px;box-sizing:border-box;border:1px solid #50627e;border-radius:2px;background:linear-gradient(#f7f9fd,#e3eaf4 50%,#c8d5e7);"></div><div style="position:absolute;left:-218.5px;width:600px;top:5.37px;line-height:12.64px;font-size:11px;color:#111;text-align:center;white-space:pre;">Save</div><div style="position:absolute;left:96px;top:0px;width:43px;height:22px;box-sizing:border-box;border:1px solid #50627e;border-radius:2px;background:linear-gradient(#f7f9fd,#e3eaf4 50%,#c8d5e7);"></div><div style="position:absolute;left:-182.5px;width:600px;top:5.37px;line-height:12.64px;font-size:11px;color:#111;text-align:center;white-space:pre;">SaveAs</div><div style="position:absolute;left:139px;top:1px;width:7px;height:20px;background:#bccadb"></div><div style="position:absolute;left:145px;top:0px;width:26px;height:22px;box-sizing:border-box;border:1px solid #50627e;border-radius:2px;background:linear-gradient(#f7f9fd,#e3eaf4 50%,#c8d5e7);"></div><div style="position:absolute;left:-142.0px;width:600px;top:5.37px;line-height:12.64px;font-size:11px;color:#111;text-align:center;white-space:pre;">Cut</div><div style="position:absolute;left:170px;top:0px;width:34px;height:22px;box-sizing:border-box;border:1px solid #50627e;border-radius:2px;background:linear-gradient(#f7f9fd,#e3eaf4 50%,#c8d5e7);"></div><div style="position:absolute;left:-113.0px;width:600px;top:5.37px;line-height:12.64px;font-size:11px;color:#111;text-align:center;white-space:pre;">Copy</div><div style="position:absolute;left:203px;top:0px;width:35px;height:22px;box-sizing:border-box;border:1px solid #50627e;border-radius:2px;background:linear-gradient(#f7f9fd,#e3eaf4 50%,#c8d5e7);"></div><div style="position:absolute;left:-79.5px;width:600px;top:5.37px;line-height:12.64px;font-size:11px;color:#111;text-align:center;white-space:pre;">Paste</div><div style="position:absolute;left:237px;top:0px;width:51px;height:22px;box-sizing:border-box;border:1px solid #50627e;border-radius:2px;background:linear-gradient(#f7f9fd,#e3eaf4 50%,#c8d5e7);"></div><div style="position:absolute;left:-37.5px;width:600px;top:5.37px;line-height:12.64px;font-size:11px;color:#111;text-align:center;white-space:pre;">InsertTxt</div><div style="position:absolute;left:287px;top:0px;width:31px;height:22px;box-sizing:border-box;border:1px solid #50627e;border-radius:2px;background:linear-gradient(#f7f9fd,#e3eaf4 50%,#c8d5e7);"></div><div style="position:absolute;left:2.5px;width:600px;top:5.37px;line-height:12.64px;font-size:11px;color:#111;text-align:center;white-space:pre;">Find</div><div style="position:absolute;left:317px;top:0px;width:48px;height:22px;box-sizing:border-box;border:1px solid #50627e;border-radius:2px;background:linear-gradient(#f7f9fd,#e3eaf4 50%,#c8d5e7);"></div><div style="position:absolute;left:41.0px;width:600px;top:5.37px;line-height:12.64px;font-size:11px;color:#111;text-align:center;white-space:pre;">Replace</div><div style="position:absolute;left:364px;top:0px;width:52px;height:22px;box-sizing:border-box;border:1px solid #50627e;border-radius:2px;background:linear-gradient(#f7f9fd,#e3eaf4 50%,#c8d5e7);"></div><div style="position:absolute;left:90.0px;width:600px;top:5.37px;line-height:12.64px;font-size:11px;color:#111;text-align:center;white-space:pre;">Wrap+/-</div><div style="position:absolute;left:415px;top:0px;width:67px;height:22px;box-sizing:border-box;border:1px solid #50627e;border-radius:2px;background:linear-gradient(#f7f9fd,#e3eaf4 50%,#c8d5e7);"></div><div style="position:absolute;left:148.5px;width:600px;top:5.37px;line-height:12.64px;font-size:11px;color:#111;text-align:center;white-space:pre;">LineNum+/-</div>
</div>
<div style="position:absolute;left:808px;top:599px;width:462px;height:404px;background:#fff"></div>
<div style="position:absolute;left:1254px;top:600px;width:16px;height:403px;background:#f0f0f0"></div>
<div style="position:absolute;left:1255px;top:617px;width:14px;height:183px;background:#c2c2c2"></div>
<svg style="position:absolute;left:1257px;top:605px" width="9" height="6" viewBox="0 0 9 6"><polyline points="1,5 4.5,1.5 8,5" fill="none" stroke="#333" stroke-width="1.6"/></svg>
<svg style="position:absolute;left:1257px;top:997px" width="9" height="6" viewBox="0 0 9 6"><polyline points="1,1 4.5,4.5 8,1" fill="none" stroke="#555" stroke-width="1.4"/></svg>
<div style="position:absolute;left:808px;top:599px;width:446px;height:404px;overflow:hidden;">
<div style="position:absolute;left:2px;top:2.76px;line-height:14.02px;font-size:12.2px;white-space:pre;"><span style="color:#1a9a1a">&#x27;set window size&#x27;</span></div>
<div style="position:absolute;left:2px;top:17.76px;line-height:14.02px;font-size:12.2px;white-space:pre;"><span style="color:#000">!window=3810</span></div>
<div style="position:absolute;left:2px;top:32.76px;line-height:14.02px;font-size:12.2px;white-space:pre;"><span style="color:#1a9a1a">&#x27;get size of workfile&#x27;</span></div>
<div style="position:absolute;left:2px;top:47.76px;line-height:14.02px;font-size:12.2px;white-space:pre;"><span style="color:#000">!lenght=@obsrange</span></div>
<div style="position:absolute;left:2px;top:62.76px;line-height:14.02px;font-size:12.2px;white-space:pre;"><span style="color:#1a9a1a">&#x27;declare equation for estimation&#x27;</span></div>
<div style="position:absolute;left:2px;top:77.76px;line-height:14.02px;font-size:12.2px;white-space:pre;"><span style="color:#000">equation eq01</span></div>
<div style="position:absolute;left:2px;top:92.76px;line-height:14.02px;font-size:12.2px;white-space:pre;"><span style="color:#1a9a1a">&#x27;set step size&#x27;</span></div>
<div style="position:absolute;left:2px;top:107.76px;line-height:14.02px;font-size:12.2px;white-space:pre;"><span style="color:#000">!step=1</span></div>
<div style="position:absolute;left:2px;top:122.76px;line-height:14.02px;font-size:12.2px;white-space:pre;"><span style="color:#1a9a1a">&#x27;calculate number of rolls&#x27;</span></div>
<div style="position:absolute;left:2px;top:137.76px;line-height:14.02px;font-size:12.2px;white-space:pre;"><span style="color:#000">!nrolls=@floor((!lenght-!window)/!step)</span></div>
<div style="position:absolute;left:2px;top:167.76px;line-height:14.02px;font-size:12.2px;white-space:pre;"><span style="color:#1a9a1a">&#x27;matrix to store coefficient estimates&#x27;</span></div>
<div style="position:absolute;left:2px;top:182.76px;line-height:14.02px;font-size:12.2px;white-space:pre;"><span style="color:#000">Matrix(5,!nrolls)coefmat </span><span style="color:#1a9a1a">&#x27;where 5 is the number of coefficients</span></div>
<div style="position:absolute;left:2px;top:197.76px;line-height:14.02px;font-size:12.2px;white-space:pre;"><span style="color:#1a9a1a">&#x27;series to store forecast estimates</span></div>
<div style="position:absolute;left:2px;top:212.76px;line-height:14.02px;font-size:12.2px;white-space:pre;"><span style="color:#000">series fcast</span></div>
<div style="position:absolute;left:2px;top:227.76px;line-height:14.02px;font-size:12.2px;white-space:pre;"><span style="color:#000">series fcastse</span></div>
<div style="position:absolute;left:2px;top:242.76px;line-height:14.02px;font-size:12.2px;white-space:pre;"><span style="color:#000">series fcastvar</span></div>
<div style="position:absolute;left:2px;top:272.76px;line-height:14.02px;font-size:12.2px;white-space:pre;"><span style="color:#1a9a1a">&#x27;catching start and end points</span></div>
<div style="position:absolute;left:2px;top:287.76px;line-height:14.02px;font-size:12.2px;white-space:pre;"><span style="color:#000">%start= </span><span style="color:#e00000">&quot;@first&quot;</span></div>
<div style="position:absolute;left:2px;top:302.76px;line-height:14.02px;font-size:12.2px;white-space:pre;"><span style="color:#000">%end= </span><span style="color:#e00000">&quot;@last&quot;</span></div>
<div style="position:absolute;left:2px;top:317.76px;line-height:14.02px;font-size:12.2px;white-space:pre;"><span style="color:#1a9a1a">&#x27;variable keeping track of how many rolls we&#x27;ve done</span></div>
<div style="position:absolute;left:2px;top:332.76px;line-height:14.02px;font-size:12.2px;white-space:pre;"><span style="color:#000">!j=0</span></div>
<div style="position:absolute;left:2px;top:347.76px;line-height:14.02px;font-size:12.2px;white-space:pre;"><span style="color:#1a9a1a">&#x27;move sample !step obs at a time</span></div>
<div style="position:absolute;left:2px;top:362.76px;line-height:14.02px;font-size:12.2px;white-space:pre;"><span style="color:#1010e0">for</span><span style="color:#000"> !i=1 </span><span style="color:#1010e0">to</span><span style="color:#000"> !lenght-!window+1-!step </span><span style="color:#1010e0">step</span><span style="color:#000"> !step</span></div>
<div style="position:absolute;left:2px;top:377.76px;line-height:14.02px;font-size:12.2px;white-space:pre;"><span style="color:#000">!j=!j+1</span></div>
<div style="position:absolute;left:2px;top:392.76px;line-height:14.02px;font-size:12.2px;white-space:pre;"><span style="color:#1a9a1a">&#x27;set sample for estimation period</span></div>
</div>
</body></html>
